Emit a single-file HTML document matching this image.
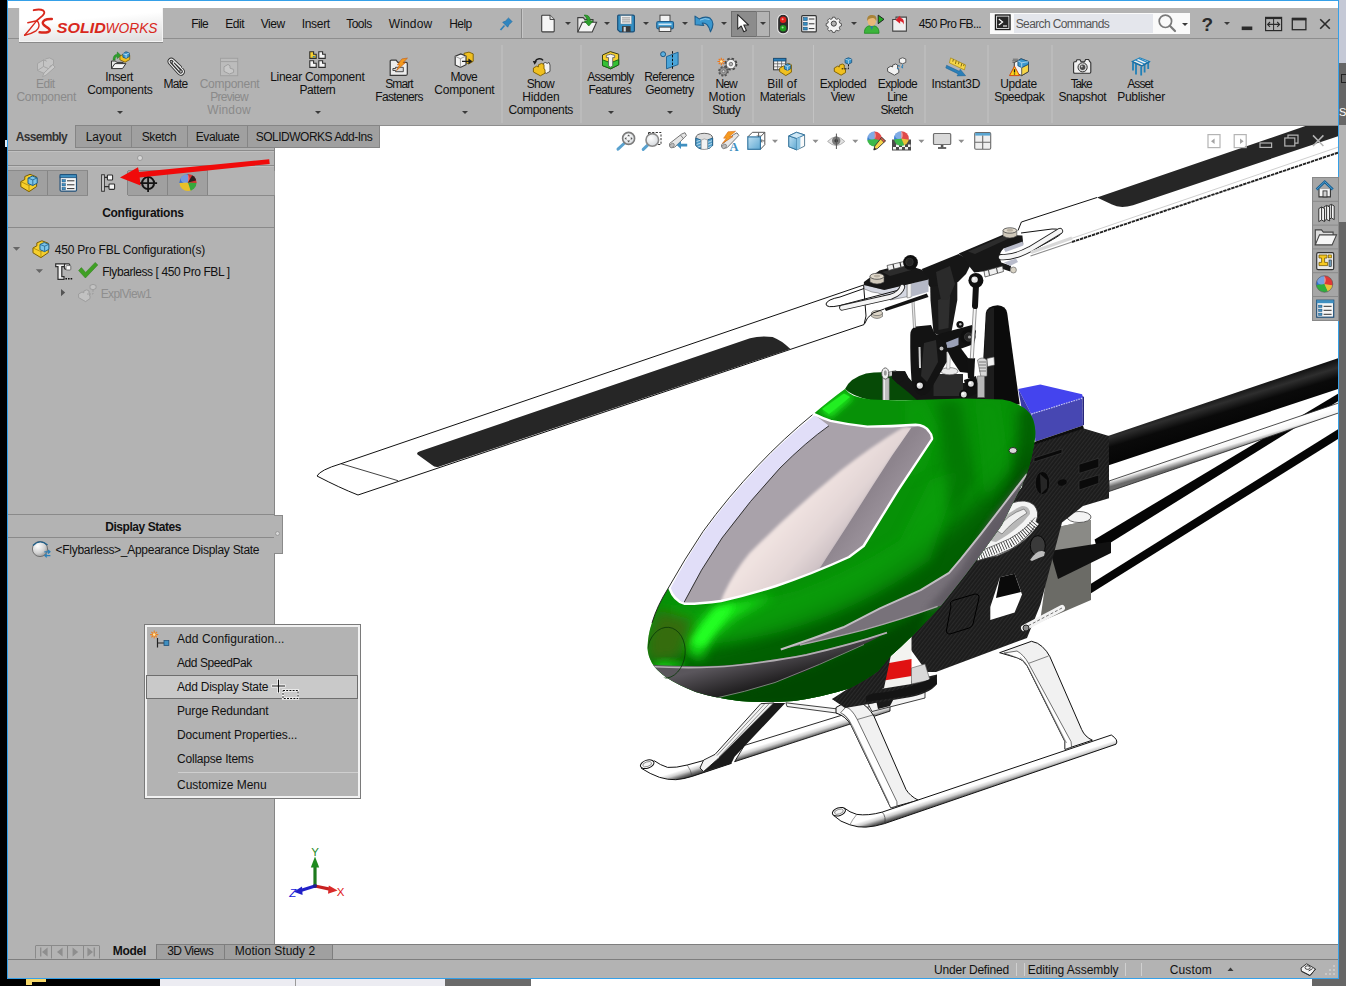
<!DOCTYPE html>
<html>
<head>
<meta charset="utf-8">
<title>SOLIDWORKS</title>
<style>
*{box-sizing:border-box;margin:0;padding:0}
html,body{width:1346px;height:986px;overflow:hidden;background:#fff}
body{position:relative;font-family:"Liberation Sans",sans-serif;font-size:12px;color:#1a1a1a}
.a{position:absolute}
.t{position:absolute;white-space:nowrap;line-height:13px;font-size:12px;color:#111}
.vl{position:absolute;width:1px;background:#c2c2c2}
.hl{position:absolute;height:1px;background:#8a8a8a}
.dd{position:absolute;width:0;height:0;border-left:3px solid transparent;border-right:3px solid transparent;border-top:3px solid #3a3a3a}
svg{position:absolute;overflow:visible}
</style>
</head>
<body>

<!-- desktop.html -->
<div class="a" style="left:0;top:0;width:8px;height:986px;background:#000"></div>
<div class="a" style="left:1339px;top:0;width:7px;height:986px;background:#666"></div>
<div class="a" style="left:1339px;top:0;width:7px;height:63px;background:#c5c9d6"></div>
<div class="a" style="left:1339px;top:125px;width:7px;height:97px;background:#b4b4b4"></div>
<div class="a" style="left:1341px;top:74px;width:5px;height:9px;border:1px solid #222;border-right:0"></div>
<div class="a" style="left:0;top:979px;width:1346px;height:7px;background:#fff"></div>
<div class="a" style="left:0;top:979px;width:160px;height:7px;background:#000"></div>
<div class="a" style="left:26px;top:979px;width:20px;height:3px;background:#f5d76a"></div>
<div class="a" style="left:26px;top:981px;width:6px;height:4px;background:#f5d76a"></div>
<div class="a" style="left:160px;top:979px;width:285px;height:7px;background:#ececf2"></div>
<div class="a" style="left:295px;top:979px;width:1px;height:7px;background:#9a9a9a"></div>
<div class="a" style="left:445px;top:979px;width:86px;height:7px;background:#6a6a6a"></div>
<div class="a" style="left:1312px;top:979px;width:34px;height:7px;background:#666"></div>
<div class="a" style="left:5px;top:140px;width:2px;height:7px;background:#dfeaf6"></div>
<div class="a" style="left:1339px;top:106px;color:#fff;font-size:11px;line-height:13px;white-space:nowrap">Sh</div>

<!-- chrome.html -->
<div class="a" style="left:7px;top:0;width:1332px;height:979px;border:1px solid #35a0e8;background:#fff"></div>
<div class="a" style="left:8px;top:8px;width:1330px;height:31px;background:#b3b3b3"></div>
<div class="hl" style="left:8px;top:38px;width:1330px;background:#8e8e8e"></div>
<div class="a" style="left:8px;top:39px;width:1330px;height:87px;background:#b3b3b3"></div>
<div class="hl" style="left:8px;top:125px;width:1330px;background:#8e8e8e"></div>

<!-- viewport.html -->
<div class="a" style="left:276px;top:126px;width:1062px;height:818px;background:#fff"></div>
<div class="a" style="left:8px;top:944px;width:1330px;height:34px;background:#b3b3b3"></div>
<div class="hl" style="left:156px;top:944px;width:1182px;background:#7e7e7e"></div>
<div class="hl" style="left:8px;top:959px;width:1330px;background:#7e7e7e"></div>

<!-- heli.html -->
<svg style="left:0;top:0" width="1346" height="986" viewBox="0 0 1346 986">
<defs>
<clipPath id="vpc"><rect x="276" y="126" width="1062" height="818"/></clipPath>
<filter id="b3" x="-20%" y="-20%" width="140%" height="140%"><feGaussianBlur stdDeviation="3"/></filter>
<filter id="b6" x="-20%" y="-20%" width="140%" height="140%"><feGaussianBlur stdDeviation="6"/></filter>
<filter id="b10" x="-30%" y="-30%" width="160%" height="160%"><feGaussianBlur stdDeviation="10"/></filter>
<linearGradient id="gcan" gradientUnits="userSpaceOnUse" x1="800" y1="430" x2="930" y2="640">
 <stop offset="0" stop-color="#0a8f0a"/><stop offset=".35" stop-color="#029a02"/><stop offset=".7" stop-color="#018801"/><stop offset="1" stop-color="#015c01"/>
</linearGradient>
<linearGradient id="gwin" gradientUnits="userSpaceOnUse" x1="740" y1="470" x2="880" y2="560">
 <stop offset="0" stop-color="#a9a3ab"/><stop offset=".32" stop-color="#aaa2aa"/><stop offset=".42" stop-color="#e6d9da"/><stop offset=".62" stop-color="#dccdd0"/><stop offset=".7" stop-color="#9a9098"/><stop offset="1" stop-color="#8d848c"/>
</linearGradient>
<filter id="b15" x="-10%" y="-10%" width="120%" height="120%"><feGaussianBlur stdDeviation="1.600"/></filter>
<clipPath id="wleft"><path d="M600 380 L911.300 427.700 L892.100 455.400 L872.900 485.200 L847.400 525.600 L819.700 568.200 L780 640 L600 640Z"/></clipPath>
<linearGradient id="gpink" gradientUnits="userSpaceOnUse" x1="790" y1="520" x2="842.400" y2="566.500">
 <stop offset="0" stop-color="#efe2e0"/><stop offset=".45" stop-color="#e2d5d5"/><stop offset="1" stop-color="#bfb3b9"/>
</linearGradient>
<linearGradient id="gfold" gradientUnits="userSpaceOnUse" x1="860" y1="505" x2="900" y2="535">
 <stop offset="0" stop-color="#8d848d"/><stop offset="1" stop-color="#a79ea7"/>
</linearGradient>
<pattern id="carbon" width="3" height="3" patternUnits="userSpaceOnUse" patternTransform="rotate(-52)"><rect width="3" height="3" fill="#1b1b1b"/><rect width="3" height="1.200" fill="#2a2a2a"/></pattern>
<linearGradient id="gboom" gradientUnits="userSpaceOnUse" x1="1200" y1="400" x2="1211" y2="436">
 <stop offset="0" stop-color="#0c0c0c"/><stop offset=".25" stop-color="#2e2e2e"/><stop offset=".5" stop-color="#0a0a0a"/><stop offset="1" stop-color="#050505"/>
</linearGradient>
<linearGradient id="grod" gradientUnits="userSpaceOnUse" x1="1200" y1="449" x2="1203" y2="459">
 <stop offset="0" stop-color="#fff"/><stop offset=".45" stop-color="#f4f4f4"/><stop offset="1" stop-color="#6a6a6a"/>
</linearGradient>
<linearGradient id="gskid" gradientUnits="userSpaceOnUse" x1="980" y1="779" x2="984" y2="791.500">
 <stop offset="0" stop-color="#fff"/><stop offset=".32" stop-color="#fff"/><stop offset=".58" stop-color="#cfcfcf"/><stop offset=".82" stop-color="#6e6e6e"/><stop offset="1" stop-color="#3a3a3a"/>
</linearGradient>
<linearGradient id="gskid2" gradientUnits="userSpaceOnUse" x1="800" y1="728.200" x2="804" y2="741">
 <stop offset="0" stop-color="#fff"/><stop offset=".32" stop-color="#fff"/><stop offset=".58" stop-color="#cfcfcf"/><stop offset=".82" stop-color="#6e6e6e"/><stop offset="1" stop-color="#3a3a3a"/>
</linearGradient>
<linearGradient id="gunder" gradientUnits="userSpaceOnUse" x1="740" y1="660" x2="750" y2="700">
 <stop offset="0" stop-color="#5a565c"/><stop offset=".6" stop-color="#2a282a"/><stop offset="1" stop-color="#0c0c0c"/>
</linearGradient>
</defs>
<g clip-path="url(#vpc)" stroke-linejoin="round">

<!-- ============ right blade ============ -->
<path d="M1021.4 222 L1097 197.500 L1320 121 L1346 121 L1346 150 L1030.500 255.700 L1018 231 Z" fill="#fff"/>
<path d="M1097 197.500 L1320 121 L1346 121 L1346 133.500 L1133 205.300 Q1120 209 1112 204.500 Z" fill="#262626"/>
<path d="M1018 230.500 L1021.400 222 L1097 197.500" fill="none" stroke="#111" stroke-width="1"/>
<path d="M1064 241 L1340 146.500" stroke="#cfcfcf" stroke-width="1"/>
<path d="M1072 242 L1340 152" stroke="#222" stroke-width="1.900" stroke-dasharray="3.400 .8"/>
<path d="M1030.500 256 L1072 242" stroke="#8a8a8a" stroke-width="1.100"/>
<path d="M1021 233 L1052 229 Q1062 228.500 1061 233.500 Q1059 237 1030.500 251" fill="#fff" stroke="#111" stroke-width="1"/>

<!-- ============ left blade ============ -->
<path d="M341 463.700 L863.600 285 L866 316 L864 324.600 L358 495 Q340 488 317 476 Q320 470 341 463.700Z" fill="#fff" stroke="#111" stroke-width="1"/>
<path d="M341 463.700 L398 480.700" stroke="#111" stroke-width=".8"/>
<path d="M420 451.200 L750 338.300 Q760 335.500 772.600 337 Q781 340 790.400 349 L438 467 Q434.500 467.500 432 465 L417.500 454.500 Q416 452.500 420 451.200Z" fill="#262626"/>

<!-- ============ tail: supports, rod, boom ============ -->
<path d="M1061 602.400 L1346 424.200 L1346 433.900 L1061 612Z" fill="#050505"/>
<path d="M1094.600 539.400 L1346 389 L1346 396.400 L1109.200 543.500 L1097 549Z" fill="#050505"/>
<path d="M1109 481 L1346 400.500 L1346 410.400 L1109 491.500Z" fill="url(#grod)" stroke="#222" stroke-width=".8"/>
<path d="M1105 437 L1346 355.500 L1346 386.300 L1105 466.600Z" fill="url(#gboom)"/>

<!-- ============ landing gear ============ -->
<!-- far skid -->
<path d="M734.600 761.700 L744.400 745.400 L890 700.300 L890 711.100Z" fill="url(#gskid2)" stroke="#111" stroke-width=".9"/>
<path d="M641.400 768.300 Q650 774 659.400 777.300 Q668 780 675.800 779.700 Q684 779 692.100 776.400 L731.300 763.400 L705.200 760.100 L687.200 765 Q676 768 667.600 767.400 Q660 765 654.500 760.900Z" fill="url(#gskid2)" stroke="#111" stroke-width="1"/>
<path d="M687.200 765 Q691 770 692.100 776.400" fill="none" stroke="#444" stroke-width=".6"/>
<ellipse cx="647.200" cy="764.200" rx="7" ry="4" transform="rotate(-18 647.200 764.200)" fill="#fff" stroke="#111" stroke-width="1"/>
<ellipse cx="647.200" cy="764.200" rx="4.600" ry="2.300" transform="rotate(-18 647.200 764.200)" fill="#f4f4f4" stroke="#555" stroke-width=".6"/>
<!-- far struts -->
<path d="M773.800 702.900 L785.300 702.900 L734.600 756.800 L731.300 763.400 L703.600 771.500 L718.300 758.500Z" fill="#1a1a1a"/>
<path d="M760.800 703.700 L773.800 702.900 L718.300 758.500 L703.600 771.500 L700 768 L703.600 760.100 L715 754.400Z" fill="#f4f4f4" stroke="#111" stroke-width=".9"/>
<path d="M765 703.500 L717 755.500 M769.500 703.200 L719 757" stroke="#444" stroke-width=".6"/>
<!-- cross members under body -->
<path d="M785.900 702.800 L838 709 L840 713.500 L787 706.500Z" fill="#f4f4f4" stroke="#111" stroke-width=".8"/>
<path d="M868 704 L925 690 L925 698 L872 711.500Z" fill="#f4f4f4" stroke="#111" stroke-width=".8"/>
<path d="M876 700 L896 694.500 L890 706 L878 709Z" fill="#1a1a1a"/>
<!-- near front strut -->
<path d="M836 707.500 Q846 700.500 860.400 702.800 Q868 706 874.100 716.500 L906 789.500 Q910 796 918.200 800.200 L890.800 807.800 L887.800 801.700 L851.300 725.600 Q846 716 836 713Z" fill="#f1f1f1" stroke="#111" stroke-width="1"/>
<path d="M840.600 712.700 Q848 716 851.300 725.600 L887.800 801.700 L890.800 807.800 L897 806 L896.900 801.700 L857.300 719.500 Q852 709 846 707Z" fill="#fff" stroke="#333" stroke-width=".7"/>
<path d="M843 714 Q849 718 853 727 L889 803" fill="none" stroke="#555" stroke-width=".6"/>
<path d="M857.300 719.500 L874.500 714.500" stroke="#333" stroke-width=".6"/>
<!-- near rear strut -->
<path d="M999.600 652.700 L1031.500 641.300 Q1038 642.500 1042.200 646.600 Q1047 651 1049.800 656.500 L1081.700 729.600 Q1085 737 1092.400 740.200 L1065 749.300 L1065 741.700 L1027 665.600 Q1023 659.500 1017.800 658Z" fill="#f1f1f1" stroke="#111" stroke-width="1"/>
<path d="M1004 653 L1017.800 658 Q1023 659.500 1027 665.600 L1065 741.700 L1065 749.300 L1071.500 747 L1071.100 741.700 L1028.500 663.400 Q1024 655 1017 651Z" fill="#fff" stroke="#333" stroke-width=".7"/>
<path d="M1020 657.500 Q1025 661 1028.500 668 L1066.500 743" fill="none" stroke="#555" stroke-width=".6"/>
<path d="M1028.500 663.400 L1048.500 656" stroke="#333" stroke-width=".6"/>
<!-- near skid -->
<path d="M833.800 815.600 Q840 822 849.900 824.800 Q858 827.600 866 827.100 Q875 826.600 884.500 823.600 L1116 744.200 Q1119 740 1111.300 735 L882.200 812.100 Q868 816 856.800 814.400 Q849 812 845.300 808.700Z" fill="url(#gskid)" stroke="#111" stroke-width="1"/>
<path d="M882.200 812.100 Q886.500 817 884.500 823.600" fill="none" stroke="#333" stroke-width=".7"/>
<path d="M856.800 814.400 Q852 820 849.900 824.800" fill="none" stroke="#555" stroke-width=".6"/>
<ellipse cx="838.900" cy="811.700" rx="6.800" ry="3.900" transform="rotate(-18 838.900 811.700)" fill="#fff" stroke="#111" stroke-width="1"/>
<ellipse cx="838.900" cy="811.700" rx="4.600" ry="2.300" transform="rotate(-18 838.900 811.700)" fill="#f4f4f4" stroke="#555" stroke-width=".6"/>

<!-- ============ servo, gear ============ -->
<path d="M1053 528 L1091 520 L1091 600 L1040 622 Z" fill="#6b6b66"/>
<path d="M1053 528 L1091 520 L1091 546 L1053 556Z" fill="#8a8a86"/>
<path d="M1050 551 L1111 541.500 L1111 553 L1058 579Z" fill="#111"/>
<ellipse cx="1079" cy="517" rx="12" ry="5.500" fill="#f4f4f4" stroke="#444" stroke-width=".8"/>
<!-- ============ anti-rotation fin & blue box ============ -->
<path d="M985.800 313 Q987 306 997.700 305.300 Q1006 306 1007.200 313 L1019.700 404.600 L984.600 401 L983.400 357Z" fill="#0b0b0b"/>
<path d="M986.500 313 Q988 308 994 307.500 L994 400 L985 400 L984 357Z" fill="#1d1d1d"/>
<path d="M1018.200 389 L1040.300 384.400 L1082.100 394.300 L1083.200 398.500 L1031.200 414.100Z" fill="#4444ee"/>
<path d="M1031.200 414.100 L1082.500 398.100 L1082.900 425.500 L1035.700 441.500Z" fill="#4747b2"/>
<path d="M1018.200 389 L1031.200 414.100 L1035.700 441.500 L1024 422Z" fill="#3a3aa8"/>
<path d="M1082.500 396 L1084 397 L1084 425 L1082.900 425.500Z" fill="#26267a"/>
<path d="M1031.200 414.100 L1082.500 398.100" stroke="#c8c8f8" stroke-width="1.100" stroke-dasharray="1.600 1"/>

<!-- ============ frame ============ -->
<path d="M1026 447 L1083 428.300 L1109 435.900 L1109 498.200 L1083 506 L1062 522.600 L1040.400 604.800 L1027 638 L936 672 L927 672 L911 650 L905 630 L956 572 L1022 487Z" fill="url(#carbon)"/>
<path d="M1000 577.300 L1014.600 573.700 L1022 594.400 L1014.600 612.600 L990.300 620 L990.300 607Z" fill="#fff"/>
<path d="M1000 577.300 L1014.600 573.700 L1021 592 L996 598Z" fill="#0a0a0a"/>
<ellipse cx="1037.800" cy="545.700" rx="7.500" ry="10" fill="#3a3a3a" stroke="#000" stroke-width=".8"/>
<path d="M1030 560 Q1038 548 1045 552 L1044 556 Q1038 558 1032 561Z" fill="#bdbdbd"/>
<path d="M951 606 Q949 602 953 600.500 L975 594 Q979.500 594 979 598 L973 624 Q972 627 969 628 L950 634 Q946 634 946.500 630Z" fill="none" stroke="#000" stroke-width="1"/>
<ellipse cx="1042.500" cy="483" rx="7.300" ry="11.500" fill="#090909" stroke="#2e2e2e" stroke-width=".7"/>
<path d="M1040 474 L1047 480 L1047 488 L1041 494Z" fill="#262626"/>
<ellipse cx="1062.300" cy="482.500" rx="4.500" ry="3" transform="rotate(-15 1062.300 482.500)" fill="#0a0a0a"/>
<path d="M1035.700 441.500 L1082.900 425.500 L1084 428.500 L1026 447.500Z" fill="#0d0d0d"/>
<path d="M1034 458 L1062 449 L1062 453 L1034 462Z M1079 464.300 L1098.800 458.200 L1098.800 467.300 L1079 473.400Z M1079 481 L1098.800 474.900 L1098.800 483.300 L1079 490.100Z" fill="#0a0a0a" stroke="#3a3a3a" stroke-width=".6"/>
<!-- main gear (on top of frame) -->
<path d="M970 556 Q985 520 1012 503 Q1026 498 1034 505 Q1040 512 1036.200 521 L1034.200 530 Q1022 546 997.600 556 L977.400 560Z" fill="#f4f4f4" stroke="#333" stroke-width=".8"/>
<path d="M985 540 Q1000 515 1022 506 Q1030 506 1030 514 Q1018 530 996 542Z" fill="#b8b8b8"/>
<path d="M996 530 Q1008 514 1024 509 L1027 513 Q1012 522 1002 534Z" fill="#efefef" stroke="#555" stroke-width=".6"/>
<path d="M976 557 Q993 551 1010 543 Q1026 534 1035.500 521.500" fill="none" stroke="#fafafa" stroke-width="8.500"/>
<path d="M976 557 Q993 551 1010 543 Q1026 534 1035.500 521.500" fill="none" stroke="#222" stroke-width="8.500" stroke-dasharray=".7 1.900"/>
<path d="M975 553 Q993 546.500 1010 538.500 Q1026 529.500 1035 517.500" fill="none" stroke="#444" stroke-width=".7"/>
<path d="M977.400 561 Q995 557 1012 548.500 Q1027 539 1035 526" fill="none" stroke="#333" stroke-width=".8"/>
<!-- link at frame bottom -->
<path d="M1024 628 L1062 608" stroke="#f2f2f2" stroke-width="6" stroke-linecap="round"/>
<path d="M1024 628 L1062 608" stroke="#555" stroke-width=".8" stroke-dasharray="3 2"/>
<circle cx="1026" cy="628" r="3" fill="#8a8a8a" stroke="#222"/>

<!-- ============ motor & bottom plate ============ -->
<path d="M832 699 L937 674.600 L937 684 Q930 694 905 698 L845 708Z" fill="url(#carbon)"/>
<path d="M880 640 L911.500 632 L911.500 684 L874 690Z" fill="#f3f3f0"/>
<path d="M878 665 L911.500 659 L911.500 676 L875 682Z" fill="#e01212"/>
<path d="M911.500 668 L925 664 L930 680 L911.500 684Z" fill="#d9d9d9" stroke="#555" stroke-width=".6"/>
<path d="M866 694 Q905 692 936 676 L937 684 Q922 695 900 697 L866 702Z" fill="#141414"/>

<path d="M874 672 L891 655 L884 688 L845 706 L832 699Z" fill="url(#carbon)"/>
<!-- ============ canopy back rim (inside) ============ -->
<path d="M845 389 Q850 378 866 373.500 Q884 370.500 905 374.500 L930 400 L870 400 Q852 396 845 389Z" fill="#064a06"/>

<!-- ============ rotor head ============ -->
<!-- head base / swash -->
<path d="M891.900 371.300 L905 371.300 L908 377 L913 383 L985 383 L985 401 L918 401 L908 392 L898 384 L891.900 378Z" fill="#151515"/>
<path d="M933.500 374 L963 374 L963 396 L933.500 396Z" fill="#2b2b2b"/>
<ellipse cx="949.500" cy="371.200" rx="8.500" ry="3.600" fill="#e9e9e9" stroke="#555" stroke-width=".6"/>
<path d="M947 350 L950.600 350 L949.800 369 L946.600 369Z" fill="#f0f0f0" stroke="#777" stroke-width=".5"/>
<!-- mast block -->
<path d="M929.900 270 L957.300 262 L957.300 300 L951.300 333 Q942 337 933.500 333 L930.500 300Z" fill="#181818"/>
<path d="M938 300 L950 296 L948.500 328 L938.500 330Z" fill="#2e2e2e"/>
<!-- cross arm + bearing -->
<path d="M928 337 L972 325 L976 331 L974 344 L960 349 L946 352 L930 346Z" fill="#121212"/>
<circle cx="968" cy="337" r="7.600" fill="#0e0e0e"/><circle cx="968.600" cy="337" r="4.200" fill="#262626" stroke="#3c3c3c" stroke-width=".7"/><circle cx="969.500" cy="337" r="1.600" fill="#9a9a9a"/>
<circle cx="960" cy="324.500" r="3.600" fill="#111"/><circle cx="960.300" cy="324.300" r="1.300" fill="#bdbdbd"/>
<path d="M946 342.500 L958.500 337.500 L958.500 345 L947.500 349.500Z" fill="#9aa0b6"/>
<!-- A arm -->
<path d="M946 348 L960 347 L971 362 L969 373 L960 372 L952 360Z" fill="#101010"/>
<!-- left arm -->
<path d="M910.300 335 Q910.300 328 916 326.500 L931 325 L934 332 L946.600 345 L946.600 362 L931 389 Q926 396.500 920 395 Q913 392 911.500 380 Q910 360 910.300 335Z" fill="#131313"/>
<path d="M924 343 L936 340 L938 362 L927 382 L921 376Z" fill="#2a2a2a"/>
<path d="M918.500 347 L920.500 347 L921 368 L919 368Z" fill="#cfcfcf"/>
<circle cx="919.800" cy="385.600" r="4" fill="#dcdcdc" stroke="#0c0c0c" stroke-width="1.800"/><circle cx="918.800" cy="384.600" r="1.300" fill="#fff"/>
<circle cx="941.500" cy="348.500" r="2.600" fill="#bdbdbd" stroke="#111" stroke-width="1.200"/>
<!-- right lower link & balls -->
<path d="M966.800 358.200 L975.100 358.200 L974 378 L968 378Z" fill="#111"/>
<path d="M964 380 L976 376 L980 392 L968 398Z" fill="#111"/>
<circle cx="970.900" cy="383.800" r="3.800" fill="#dcdcdc" stroke="#0c0c0c" stroke-width="1.800"/><circle cx="970" cy="383" r="1.200" fill="#fff"/>
<circle cx="963.800" cy="394.500" r="3.800" fill="#dcdcdc" stroke="#0c0c0c" stroke-width="1.800"/><circle cx="963" cy="393.600" r="1.200" fill="#fff"/>
<!-- silver bits right -->
<path d="M977.500 360 Q982 356 987 360 L987 376 L981 377Z" fill="#d8d8d8" stroke="#555" stroke-width=".6"/>
<path d="M979 362 L986 362 M979 365 L986 365 M979 368 L986 368 M979 371 L986 371" stroke="#555" stroke-width=".7"/>
<path d="M987 358.500 L994 357 L994.500 365 L987.500 366.600Z" fill="#f2f2f2" stroke="#555" stroke-width=".6"/>
<path d="M977.500 376 L984.600 376 L984.600 397.500 L977.500 397.500Z" fill="#b8b8b8" stroke="#555" stroke-width=".5"/>
<!-- pushrods -->
<path d="M912.900 300 L914.600 327.800" stroke="#e8e8e8" stroke-width="2.200"/><path d="M911.800 300 L913.500 327.800 M914 300 L915.700 327.800" stroke="#555" stroke-width=".5"/>
<path d="M975 307 L971.800 358.200" stroke="#f4f4f4" stroke-width="3"/><path d="M976.500 307 L973.300 358.200 M973.500 307 L970.300 358.200" stroke="#555" stroke-width=".6"/>
<path d="M975.900 287 L975 306" stroke="#111" stroke-width="6" stroke-linecap="round"/>
<circle cx="975.900" cy="280.400" r="7.500" fill="#0e0e0e"/><circle cx="974.600" cy="279.600" r="3.200" fill="#e4e4e4"/><circle cx="973.800" cy="278.800" r="1.100" fill="#fff"/>
<!-- center hub bar -->
<path d="M921.900 268.900 L958.700 254 L972 262 L966 274 L958 282 L930 287 L925 280Z" fill="#161616"/>
<path d="M936 272 L950 266 L955 284 L948 300 L941 300 L938 286Z" fill="#2a2a2a"/>
<!-- right grip -->
<path d="M958.700 253.400 L1003.600 234.600 L1022.400 235.400 L1023.300 244.400 L1003.600 248.500 Q997.500 254 1001.200 262.400 L1011 265.700 L1010.200 271.400 L1002.800 268.900 L974.200 272.400 L969 266 L964 258Z" fill="#171717"/>
<path d="M968 251.500 L1003 236.500 L1012 237 L975 254Z" fill="#2c2c2c"/>
<path d="M1003.600 248.500 L1022.600 241.500 L1023.300 245.500 L1005.500 252Z" fill="#b9bccb"/>
<path d="M1004 262.500 L1016 258.500 L1018 262 L1010 266Z" fill="#b9bccb"/>
<!-- silver pin right -->
<path d="M984 271 L1002.500 266 L1003.500 271.500 L985 277Z" fill="#f0f0f0" stroke="#333" stroke-width=".7"/>
<path d="M988.500 270 L989.500 275.500M996.500 268 L997.500 273" stroke="#444" stroke-width="1"/>
<!-- bolts right -->
<path d="M1003 230.500 L1003 236 Q1009.900 240 1016.800 236 L1016.800 230.500Z" fill="#cfc8ba" stroke="#444" stroke-width=".6"/>
<ellipse cx="1009.900" cy="230.500" rx="6.900" ry="2.700" fill="#e0d9cb" stroke="#444" stroke-width=".8"/>
<ellipse cx="1009.900" cy="230.300" rx="3.200" ry="1.200" fill="#b8b0a2"/>
<circle cx="1013.400" cy="270" r="3" fill="#d8d2c4" stroke="#555" stroke-width=".6"/>
<!-- right blade root clip (white U) -->
<path d="M1001 257.200 Q1013.500 258 1029.800 249.300 L1060 231" fill="none" stroke="#222" stroke-width="6.200" stroke-linecap="round"/>
<path d="M1001 257.200 Q1013.500 258 1029.800 249.300 L1060 231" fill="none" stroke="#f6f6f6" stroke-width="4.400" stroke-linecap="round"/>
<path d="M1031 252.500 L1072 238" stroke="#d8d8d8" stroke-width="3"/>
<!-- left grip -->
<path d="M884.300 308.200 L926.800 293.500 L928.500 297 L886 311Z" fill="#141414"/>
<path d="M863.900 284.500 L884.300 289.400 L907.200 283.600 L907.200 296.700 L890 300 Q884 293 872 292 L864.500 289Z" fill="#d5d8e2" stroke="#555" stroke-width=".5"/>
<path d="M907.200 283.600 L911.300 283 L911.300 297 L907.200 298Z" fill="#f2f2f2" stroke="#555" stroke-width=".5"/>
<path d="M911.300 283.600 L928.500 278.700 L928.500 291.800 L911.300 296.700Z" fill="#b4b8c6"/>
<path d="M863.900 282 L879.400 270.600 L903.900 264 L921.900 269.800 L928.500 277.100 L928.500 279.500 L884.300 290 L863.900 285Z" fill="#171717"/>
<path d="M882 272 L903 266.500 L913 269.500 L890 276Z" fill="#2c2c2c"/>
<!-- silver pin left + ball -->
<path d="M887 265.500 L908 260.500 L909.500 265 L888.500 270.500Z" fill="#f0f0f0" stroke="#333" stroke-width=".7"/>
<path d="M893 264 L894 269M900 262.300 L901 267.300" stroke="#333" stroke-width="1.200"/>
<circle cx="910.500" cy="262.400" r="7.400" fill="#0e0e0e"/><circle cx="909.500" cy="262" r="3.800" fill="#242424" stroke="#3a3a3a" stroke-width=".6"/>
<!-- bolts left -->
<path d="M870 276.300 L870 282 Q877 286 884 282 L884 276.300Z" fill="#cfc8ba" stroke="#444" stroke-width=".6"/>
<ellipse cx="877" cy="276.300" rx="7" ry="3" fill="#e0d9cb" stroke="#444" stroke-width=".8"/>
<ellipse cx="877" cy="276.100" rx="3.200" ry="1.300" fill="#b8b0a2"/>
<path d="M871.500 313 L871.500 316.500 Q877 320.500 882.500 316.500 L882.500 313Z" fill="#cfc8ba" stroke="#555" stroke-width=".6"/>
<ellipse cx="877" cy="313" rx="5.500" ry="2.600" fill="#ddd6c8" stroke="#555" stroke-width=".6"/>
<!-- left blade root loop -->
<path d="M899 290 L840 305.500 Q826 308.500 826 304 Q827 299.500 840 297 L864 288.500" fill="none" stroke="#111" stroke-width="1"/>
<path d="M842 307.700 L890.900 296.700 Q900.700 293 902.300 286.900" fill="none" stroke="#222" stroke-width="5.800" stroke-linecap="round"/>
<path d="M842 307.700 L890.900 296.700 Q900.700 293 902.300 286.900" fill="none" stroke="#f4f4f4" stroke-width="4" stroke-linecap="round"/>
<path d="M864.700 323.700 Q866 318 872.900 313 L884.300 309" fill="none" stroke="#111" stroke-width="1"/>
<!-- antenna-like pin on canopy front -->
<path d="M882.600 378 L889.300 378 L889.300 401 L882.600 401Z" fill="#bdbdbd" stroke="#555" stroke-width=".5"/>
<path d="M884.300 378 V401" stroke="#eee" stroke-width="1.300"/>
<ellipse cx="885.300" cy="373.500" rx="3.600" ry="5.600" fill="#efefef" stroke="#444" stroke-width=".8"/>
<ellipse cx="885.300" cy="373" rx="1.500" ry="2.800" fill="#9a9a9a"/>
<path d="M889 372 L896 370.500 L896 375 L889 376.500Z" fill="#cfcfcf" stroke="#444" stroke-width=".5"/>
<path d="M892 371.300 L905 371.300 L908 377 L898 384 L892 378Z" fill="#151515"/>

<!-- ============ canopy ============ -->
<path id="canopy" d="M647.500 648 Q648 634 652 622.800 Q657 606 668.300 588 Q684 560 703 531.500 Q728 497 757.700 465.800 Q784 438 812.500 414.700 Q830 400 845 389 Q849 394 853.700 395.700 Q862 398.500 871 399.600 Q888 400.500 905.900 400.200 L963.800 398.600 L1002.500 399.600 Q1012 401 1019.900 405.400 Q1027 409 1031.500 416 Q1035 423 1035.300 431.500 Q1035.500 438 1034.300 443 Q1032 458 1026 476.500 L1018 492.700 L1001.700 525.200 L981.400 553.600 L965.200 574.900 L938.800 608.400 L911.600 636.500 Q900 648 889.300 657.300 Q884 664 878 671 Q866 680 849 688.500 Q822 697 794 701 Q766 703 739.500 701 Q715 698 695.700 692 Q678 685 666.500 677.500 Q656 670 652 663 Q648 656 647.500 648Z" fill="#079107"/>
<clipPath id="cc"><use href="#canopy"/></clipPath>
<g clip-path="url(#cc)">
 <!-- broad shading -->
 <path d="M640 700 L640 660 Q760 640 860 590 Q960 530 1040 440 L1050 520 L940 680 L800 720Z" fill="#024f02" opacity=".75" filter="url(#b10)"/>
 <path d="M1040 400 L1040 480 L1000 520 Q1020 460 1018 410Z" fill="#035003" opacity=".7" filter="url(#b6)"/>
 <path d="M668 604 Q720 612 800 590 Q850 572 900 540 L930 480 L960 470 L930 560 Q860 610 780 632 Q720 646 680 646Z" fill="#0aa60a" opacity=".55" filter="url(#b6)"/>
 <!-- vertical bands right of window -->
 <path d="M905 400 L925 400 L940 430 L925 470 L905 480 Z" fill="#10a410" opacity=".45" filter="url(#b6)"/>
 <path d="M938 400 L960 400 L975 480 L950 520Z" fill="#036403" opacity=".5" filter="url(#b6)"/>
 <path d="M975 400 L1000 400 L1010 470 L985 500Z" fill="#0c9c0c" opacity=".4" filter="url(#b6)"/>
 <!-- top highlight near opening -->
 <path d="M819 410.200 L844 391.900 L853.700 397.700 L830.600 418Z" fill="#1fe41f" filter="url(#b3)"/>
 <path d="M822 409 L844 393.500 L850 397 L829 414Z" fill="#22ee22"/>
 <!-- front highlight -->
 <path d="M686 648 L696 628 L714 607 L744 601 L776 594 L736 616 L712 636 L700 660Z" fill="#1cf41c" opacity=".9" filter="url(#b6)"/>
 <path d="M690 642 L716 608 L736 604 L704 646Z" fill="#20ff20" filter="url(#b3)"/>
 <!-- nose shading -->
 <path d="M646 642 L658 610 L692 620 L680 658 L650 662Z" fill="#356c10" filter="url(#b6)"/>
 <path d="M700 690 Q760 686 820 668 L900 636 L915 650 L860 700 L700 706Z" fill="#013c01" opacity=".6" filter="url(#b6)"/>
 <path d="M650 664 L664 660 L690 664 L660 672Z" fill="#18d018" opacity=".8" filter="url(#b3)"/>
 <!-- lower right dark green -->
 <path d="M712 699 Q760 690 806 671 Q850 652 887 633 L925 610 L915 660 L850 700 L730 710Z" fill="#024a02" opacity=".9" filter="url(#b3)"/>
 <!-- S2 underside swoosh -->
 <path d="M640 664 Q700 668 735 664.600 Q775 660 806.400 653.900 Q850 644 887 632.300 Q876 639 864 644.200 L834.300 657.300 Q820 664 806 671 Q790 677 775 682 Q757 688 740 692 L712 698.500 L690 700 L640 690Z" fill="url(#gunder)"/>
 <path d="M648 666.500 Q700 669 735 665.500 Q775 661 806.400 654.800 Q850 645 887 632.600" fill="none" stroke="#b2aeb2" stroke-width="1.700"/>
 <path d="M864 644.500 Q820 665 775 682.500 Q745 692 712 699" fill="none" stroke="#8a868a" stroke-width=".9"/>
 <!-- S1 swoosh -->
 <path d="M780.800 649.500 Q812 639 843.200 627.300 L880 608.400 L920.600 590.100 L949 572.900 L961.100 558.700 L981.400 533.300 L1001.700 507 L1026 475.500 L1045 470 L1045 500 L970 600 L937.600 606.400 Q900 620 864 629.800 Q836 637 810 643Z" fill="#78727a"/>
 <path d="M990 520 L1030 470 L1045 480 L960 600 L925 611 L960 570Z" fill="#5c575e" opacity=".8" filter="url(#b3)"/>
 <path d="M780.800 649.500 Q812 639 843.200 627.300 L880 608.400 L920.600 590.100 L949 572.900 L961.100 558.700 L981.400 533.300 L1001.700 507 L1027 474" fill="none" stroke="#c2bec2" stroke-width="2"/>
 <path d="M800 645 Q836 637 864 629.800 Q900 620 937.600 606.400" fill="none" stroke="#aaa6aa" stroke-width="1.300"/>
</g>
<!-- nose cap circle -->
<ellipse cx="666.200" cy="652.700" rx="19" ry="25.500" transform="rotate(6 666 652)" fill="none" stroke="#0a3a0a" stroke-width=".8" clip-path="url(#cc)"/>
<!-- window -->
<defs><path id="win" d="M814.100 414.100 Q822 418 830.600 420.800 Q848 424.500 867.300 426.600 Q892 426.500 915.600 424.700 Q925 425 929.100 431.500 Q932.500 435 932 439.200 L898.200 490 L863.600 546 L849 557 Q812 574 776 586 Q748 595 721 601 Q700 604 684.700 603.800 Q674 601 669.400 588 Q684 560 703 531.500 Q728 497 757.700 465.800 Q784 438 814.100 414.100Z"/></defs>
<use href="#win" fill="#a9a2aa"/>
<clipPath id="wc"><use href="#win"/></clipPath>
<g clip-path="url(#wc)">
 <path d="M911.300 427.700 L940 420 L940 450 L870 548 L819.700 568.200 L847.400 525.600 L872.900 485.200 L892.100 455.400Z" fill="url(#gfold)"/>
 <g clip-path="url(#wleft)">
  <path d="M902 428 L915 426 L893.100 455.400 L873.900 485.200 L848.400 525.600 L820.700 568.200 L790 590 L719 606 L723.900 593.800 Q734 572 749.400 553.300 Q790 512 841 470.300 Q872 446 902 428Z" fill="url(#gpink)" filter="url(#b15)"/>
 </g>
 <path d="M814.300 414.700 Q784 438 757.700 465.800 Q728 497 703 531.500 Q684 560 669.400 588 Q672 598 684 602.500 Q700 570 722 538 Q750 500 780 468 Q806 442 829 425.700Z" fill="#e1def8"/>
 <path d="M829 425.700 Q806 442 780 468 Q750 500 722 538 Q700 570 684 602.500" fill="none" stroke="#222" stroke-width=".9"/>
</g>
<use href="#win" fill="none" stroke="#fff" stroke-width="2.400"/>
<path d="M812.500 414.700 Q784 438 757.700 465.800 Q728 497 703 531.500 Q684 560 668.300 588 Q657 606 652 622.800" fill="none" stroke="#1a1a1a" stroke-width=".9"/>
<!-- screw -->
<ellipse cx="1013" cy="450.500" rx="4" ry="3" fill="#d8d8d8" stroke="#222" stroke-width=".9"/>
</g>
</svg>

<!-- hud.html -->
<svg style="left:0;top:0" width="1346" height="986" viewBox="0 0 1346 986">
<defs>
<linearGradient id="gb1" x1="0" y1="0" x2="1" y2="1"><stop offset="0" stop-color="#bfe0f2"/><stop offset="1" stop-color="#5ea8d2"/></linearGradient>
<radialGradient id="glens" cx=".4" cy=".35" r=".7"><stop offset="0" stop-color="#ffffff"/><stop offset="1" stop-color="#d4d8dc"/></radialGradient>
<clipPath id="ball1"><circle cx="874.600" cy="139" r="7.400"/></clipPath>
<clipPath id="ball2"><circle cx="901.400" cy="138.600" r="7.400"/></clipPath>
<clipPath id="ball3"><circle cx="1324.500" cy="284" r="8.300"/></clipPath>
</defs>
<!-- zoom to fit -->
<path d="M624.600 143 L618 149.200" stroke="#5aa2cf" stroke-width="3" stroke-linecap="round"/>
<circle cx="628.600" cy="138.400" r="6" fill="url(#glens)" stroke="#7c7c7c" stroke-width="1.600"/>
<path d="M628.600 134.400 l1.500 1.800 h-3z M628.600 142.400 l1.500 -1.800 h-3z M624.600 138.400 l1.800 -1.500 v3z M632.600 138.400 l-1.800 -1.500 v3z" fill="#555"/>
<!-- zoom to area -->
<rect x="648.500" y="132.500" width="12.500" height="12" fill="none" stroke="#333" stroke-width="1" stroke-dasharray="2.200 1.400"/>
<path d="M648.400 144.400 L643.200 149.400" stroke="#5aa2cf" stroke-width="3" stroke-linecap="round"/>
<circle cx="652.300" cy="139.900" r="6.300" fill="url(#glens)" stroke="#8a8a8a" stroke-width="1.600"/>
<!-- previous view -->
<g transform="translate(668,131.500)"><path d="M1.600 12 L13.600 2.600 L17 1.200 L18.400 4 L16 6.400 L6.800 15.600 Q3.400 17.400 1.600 14.600Z" fill="#e6e6e6" stroke="#777" stroke-width="1"/><path d="M12.600 3.600 L15.400 7.200" stroke="#777" stroke-width=".9"/><ellipse cx="4" cy="14" rx="2.600" ry="1.800" transform="rotate(-40 4 14)" fill="#bdbdbd" stroke="#777" stroke-width=".7"/><path d="M8.600 13.600 L13 9.800 V12.200 H19.200 V15 H13 V17.400Z" fill="#3f8fc0"/></g>
<!-- section view -->
<g transform="translate(695,132.500)"><path d="M.8 5.600 Q.8 1 9.200 .8 Q17.600 1 17.600 5.600 V13 Q15 16.600 9.200 16.800 Q3.400 16.600 .8 13Z" fill="#dcdcdc" stroke="#666" stroke-width="1"/><path d="M.8 5.600 L6.200 7.600 V16.600 Q2.400 15.400 .8 13Z M17.600 5.600 L12.600 7.400 V16.400 Q16 15.200 17.600 13Z" fill="#4f9cc8" stroke="#1f5f8a" stroke-width=".9"/><path d="M1.600 9 L5.600 7.600M1.600 12 L6 10.400M2.600 14.600 L6 13.400M13 9.800 L17 8.200M13 12.600 L17 11M13 15.400 L16.600 13.800" stroke="#cfe6f3" stroke-width=".8"/><path d="M6.200 7.600 Q9.200 5.400 12.600 7.400 V16.400 Q9.200 17.400 6.200 16.600Z" fill="#f2f2f2" stroke="#888" stroke-width=".6"/></g>
<!-- dynamic annotation -->
<g transform="translate(720,131)"><path d="M1.600 13.600 L13.600 3.600 L17 1.800 L18.800 4.400 L16.400 7 L7.200 16.600 Q3.600 18.600 1.600 15.800Z" fill="#e6e6e6" stroke="#777" stroke-width="1"/><ellipse cx="4.200" cy="15.400" rx="2.600" ry="1.800" transform="rotate(-40 4.200 15.400)" fill="#bdbdbd" stroke="#777" stroke-width=".7"/><path d="M8 .8 L15.600 .2 L9.600 5.600 L13 5.600 L2.400 12.400 L6.400 7.200 L3.600 7.200Z" fill="#f59a20" stroke="#d06010" stroke-width=".5"/><text x="9.600" y="19.600" font-family="Liberation Serif" font-weight="bold" font-size="12.500" fill="#3f8fc0">A</text></g>
<!-- view orientation -->
<g transform="translate(747,131.500)"><path d="M5.400 .8 H17.800 V13.200 L13.400 17.800 M17.800 .8 L13.400 5.400 M5.400 .8 L.8 5.400" fill="none" stroke="#555" stroke-width="1"/><path d="M11.600 1.400V5.400M10 3.800L11.600 5.400L13.200 3.800M17.400 9.400H13.600M15 7.800L13.600 9.400L15 11" fill="none" stroke="#333" stroke-width=".8"/><rect x=".8" y="5.400" width="12.600" height="12.400" fill="url(#gb1)" stroke="#2a6f9c" stroke-width="1.100"/></g>
<!-- display style -->
<g transform="translate(788,131.500)"><path d="M.8 4.400 L8.400 .8 L16.600 3.400 V14.600 L8.800 18.400 L.8 15.200Z" fill="#fafafa" stroke="#5a7f96" stroke-width="1"/><path d="M.8 4.400 L8.800 7 V18.400 L.8 15.200Z" fill="url(#gb1)" stroke="#2a6f9c" stroke-width=".9"/><path d="M.8 4.400 L8.400 .8 L16.600 3.400 L8.800 7Z" fill="#cfe8f5" stroke="#2a6f9c" stroke-width=".9"/><path d="M8.800 7 L12.400 5.400 V16.600 L8.800 18.400Z" fill="#8cc4e2"/></g>
<!-- eye -->
<g transform="translate(827,134)"><path d="M.6 7.400 Q9.200 -1.600 17.800 7.400 Q9.200 15.600 .6 7.400Z" fill="#e2e2e2" stroke="#b0b0b0" stroke-width="1"/><circle cx="9.200" cy="6.800" r="4.200" fill="#7a7a7a"/><circle cx="9.200" cy="6.800" r="1.800" fill="#3c3c3c"/><path d="M9.400 -.4 V15" stroke="#555" stroke-width="1"/></g>
<!-- edit appearance -->
<g clip-path="url(#ball1)"><rect x="866" y="130" width="9" height="10.500" fill="#3d7fd6"/><rect x="874.600" y="130" width="9" height="11" fill="#e04a4a"/><path d="M866 140 L874.600 139 L883 141 V148 H866Z" fill="#3cb84a"/><circle cx="872" cy="135.500" r="4" fill="#fff" opacity=".35"/></g>
<path d="M881.800 137.400 L885.400 141 L877.400 148.600 L873.800 150 L874.800 146Z" fill="#f6d44a" stroke="#333" stroke-width=".9"/><path d="M881.800 137.400 L885.400 141 L884 142.400 L880.400 138.800Z" fill="#e05a4a" stroke="#333" stroke-width=".7"/><path d="M873.800 150 L874.400 147.400 L876.200 149Z" fill="#222"/>
<!-- apply scene -->
<rect x="892" y="139.500" width="19" height="11" fill="#4a4a4a"/><g fill="#f2f2f2"><rect x="893" y="147" width="3" height="2.500"/><rect x="899" y="147" width="3" height="2.500"/><rect x="905" y="147" width="3" height="2.500"/><rect x="896" y="144.500" width="3" height="2.500"/><rect x="902" y="144.500" width="3" height="2.500"/><rect x="908" y="144.500" width="2.500" height="2.500"/></g>
<g clip-path="url(#ball2)"><rect x="893" y="130" width="8.600" height="10" fill="#3d7fd6"/><rect x="901.400" y="130" width="9" height="10.500" fill="#e04a4a"/><path d="M893 139.600 L901.400 138.600 L906 147 H893Z" fill="#3cb84a"/><path d="M901.400 138.600 L910 140 V147 H905Z" fill="#e8c23a"/><circle cx="899" cy="135" r="4" fill="#fff" opacity=".35"/></g>
<!-- monitor -->
<rect x="933.500" y="133.500" width="17.200" height="11" rx="1" fill="#d9d9d9" stroke="#6e6e6e" stroke-width="1.200"/><rect x="940.800" y="145" width="2.600" height="2.400" fill="#555"/><rect x="938" y="147.200" width="8.200" height="1.600" fill="#444"/>
<!-- grid -->
<rect x="974.700" y="132.500" width="16" height="16.800" rx="1.200" fill="#efefef" stroke="#6a6a6a" stroke-width="1.100"/><rect x="975.200" y="133" width="15" height="2.600" fill="#5aa6d2"/><path d="M982.700 135.600V149M975 142.200H990.500" stroke="#6a6a6a" stroke-width="1.100"/>
<!-- hud dropdown arrows -->
<g fill="#8e8e8e"><path d="M772 139.800 h6 l-3 3.200z M812.500 139.800 h6 l-3 3.200z M852.300 139.800 h6 l-3 3.200z M918.400 139.800 h6 l-3 3.200z M958.300 139.800 h6 l-3 3.200z"/></g>
<!-- doc window controls -->
<g fill="none" stroke="#b4b4b4" stroke-width="1.200"><rect x="1208" y="134.600" width="12" height="13"/><rect x="1234.200" y="134.600" width="12" height="13"/><rect x="1284.800" y="138" width="10" height="8"/><path d="M1288 138 V135.200 H1298 V143.200 H1295"/><path d="M1313 135.400 L1323.400 146M1323.400 135.400 L1313 146" stroke-width="1.500"/></g>
<path d="M1214.600 138.400 L1211 141.200 L1214.600 144Z M1240 138.400 L1243.600 141.200 L1240 144Z" fill="#a4a4a4"/><rect x="1260" y="143" width="11.600" height="4.400" fill="none" stroke="#b4b4b4" stroke-width="1.200"/>
<!-- task pane tabs -->
<rect x="1312.500" y="177.500" width="26" height="143" fill="#a6a6a6" stroke="#888" stroke-width="1"/>
<path d="M1312.500 201.300H1338M1312.500 225.100H1338M1312.500 248.900H1338M1312.500 272.700H1338M1312.500 296.500H1338" stroke="#8a8a8a" stroke-width="1"/>
<!-- home -->
<g transform="translate(1316,180.500)"><path d="M3 8.600 V16.400 H14.400 V8.600" fill="#f6f6f6" stroke="#333" stroke-width="1.100"/><path d="M.6 9 L8.700 1.200 L16.800 9" fill="none" stroke="#1a5f90" stroke-width="2.600" stroke-linejoin="miter"/><path d="M.6 9 L8.700 1.200 L16.800 9" fill="none" stroke="#4aa0d4" stroke-width="1"/><rect x="7" y="10.400" width="4" height="6" fill="#cfcfcf" stroke="#333" stroke-width=".9"/></g>
<!-- library books -->
<g transform="translate(1318,204)" fill="#f4f4f4" stroke="#333" stroke-width="1" stroke-linejoin="round"><path d="M.8 4.600 L3.600 3 L6.600 4.600 V17.600 L3.600 16 L.8 17.600Z"/><path d="M3.600 3 V16" fill="none"/><path d="M5.800 3 L8.600 1.400 L11.600 3 V17 L8.600 15.400 L6.600 16.600 V4.600Z"/><path d="M8.600 1.400 V15.400" fill="none"/><path d="M10.800 1.600 L13.400 .4 L16.200 2 V15.600 L13.400 14 L11.600 15 V3Z"/><path d="M13.400 .4 V14" fill="none"/></g>
<!-- folder -->
<g transform="translate(1314.500,228.500)"><path d="M.8 16.400 V1.400 H7 L8.800 3.600 H18.600 V6.400" fill="#dcdcdc" stroke="#444" stroke-width="1.100"/><path d="M.8 16.400 L5 6.400 H22 L17.600 16.400Z" fill="#f6f6f6" stroke="#444" stroke-width="1.100"/></g>
<!-- design library -->
<g transform="translate(1316,252)"><rect x=".7" y=".7" width="17" height="17" rx="1.500" fill="#e8e8e8" stroke="#333" stroke-width="1.200"/><path d="M3 3 H11 V6 H8.600 V10.400 H11.600 V13.600 H3 V10.400 H5.600 V6 H3Z" fill="#f6c820" stroke="#7a5c00" stroke-width=".8"/><rect x="12.600" y="3" width="2.800" height="2.800" fill="#f6c820" stroke="#7a5c00" stroke-width=".7"/><rect x="13" y="8" width="2.400" height="6.600" fill="#6a9ab8" stroke="#333" stroke-width=".6"/></g>
<!-- appearances ball -->
<g clip-path="url(#ball3)"><rect x="1316" y="275" width="8.500" height="10.500" fill="#2f6fd0"/><rect x="1324.500" y="275" width="9" height="10.500" fill="#e03838"/><path d="M1316 285 L1324.500 284 L1329 293 H1316Z" fill="#2fae3e"/><path d="M1324.500 284 L1333 285.500 V293 H1328.500Z" fill="#e8c23a"/><circle cx="1321.500" cy="280" r="4.500" fill="#fff" opacity=".35"/></g>
<circle cx="1324.500" cy="284" r="8.300" fill="none" stroke="#555" stroke-width=".6"/>
<!-- custom properties -->
<g transform="translate(1316,299.500)"><rect x=".7" y=".7" width="17" height="17" fill="#f6f6f6" stroke="#1f4f78" stroke-width="1.200"/><rect x=".7" y=".7" width="17" height="3" fill="#3f8fc0"/><g fill="#3f8fc0" stroke="#1f4f78" stroke-width=".5"><rect x="2.600" y="5.600" width="3.400" height="2.400"/><rect x="2.600" y="9.600" width="3.400" height="2.400"/><rect x="2.600" y="13.600" width="3.400" height="2.400"/></g><path d="M7.600 6.800H15.600M7.600 10.800H15.600M7.600 14.800H15.600" stroke="#333" stroke-width="1"/></g>
<!-- triad -->
<g>
<path d="M315 886 L297.500 891.500" stroke="#2020c8" stroke-width="3.400"/><path d="M302 886.400 L293.800 891.800 L302.600 895Z" fill="#2020c8"/>
<path d="M315 886 L332 889.600" stroke="#c82020" stroke-width="3.200"/><path d="M328.800 885.400 L337.600 890.600 L328 893.800Z" fill="#d82a2a"/>
<path d="M315 886 V866" stroke="#1e7a1e" stroke-width="3.200"/><path d="M310.800 867.600 L315 856.600 L319.200 867.600Z" fill="#1e8a1e"/>
<circle cx="315" cy="886" r="2" fill="#22228a"/>
<text x="311.200" y="856.400" font-family="Liberation Sans" font-size="11.500" fill="#1e8a1e">Y</text>
<text x="336.800" y="896" font-family="Liberation Sans" font-size="11.500" fill="#e02020">X</text>
<text x="289.200" y="897" font-family="Liberation Sans" font-size="11.500" fill="#2020d8" font-style="italic">Z</text>
</g>
</svg>

<!-- leftpanel.html -->
<!-- left panel bg -->
<div class="a" style="left:8px;top:126px;width:267px;height:818px;background:#b3b3b3"></div>
<div class="vl" style="left:274px;top:148px;height:796px;background:#858585"></div>
<!-- command manager tabs -->
<div class="a" style="left:75px;top:125px;width:305px;height:23px;background:#a0a0a0;border:1px solid #858585"></div>
<div class="vl" style="left:131px;top:126px;height:21px;background:#858585"></div>
<div class="vl" style="left:187px;top:126px;height:21px;background:#858585"></div>
<div class="vl" style="left:247px;top:126px;height:21px;background:#858585"></div>
<div class="a" style="left:8px;top:125px;width:67px;height:2px;background:#b3b3b3"></div>
<!-- panel header strip -->
<div class="hl" style="left:8px;top:150px;width:266px;background:#8a8a8a"></div>
<div class="hl" style="left:8px;top:151px;width:266px;background:#c0c0c0"></div>
<div class="a" style="left:137px;top:155px;width:6px;height:6px;border-radius:3px;background:#d8d8d8;border:1px solid #9a9a9a"></div>
<div class="hl" style="left:8px;top:165px;width:266px;background:#8a8a8a"></div>
<div class="hl" style="left:8px;top:166px;width:266px;background:#c0c0c0"></div>
<!-- icon tabs -->
<div class="a" style="left:8px;top:170px;width:267px;height:26px;background:#a0a0a0;border-top:1px solid #8a8a8a;border-bottom:1px solid #8a8a8a"></div>
<div class="vl" style="left:47px;top:171px;height:24px;background:#858585"></div>
<div class="vl" style="left:87px;top:171px;height:24px;background:#858585"></div>
<div class="a" style="left:88px;top:170px;width:40px;height:26px;background:#b3b3b3"></div>
<div class="vl" style="left:127px;top:171px;height:24px;background:#858585"></div>
<div class="vl" style="left:167px;top:171px;height:24px;background:#858585"></div>
<div class="vl" style="left:207px;top:171px;height:24px;background:#858585"></div>
<div class="a" style="left:208px;top:170px;width:66px;height:25px;background:#b3b3b3"></div>
<div class="hl" style="left:8px;top:227px;width:266px;background:#8a8a8a"></div>
<!-- display states -->
<div class="a" style="left:274px;top:515px;width:9px;height:39px;background:#b3b3b3;border:1px solid #8a8a8a;border-left:0"></div>
<div class="a" style="left:275px;top:531px;width:5px;height:5px;border-radius:3px;background:#d8d8d8;border:1px solid #9a9a9a"></div>
<div class="hl" style="left:8px;top:514px;width:266px;background:#8a8a8a"></div>
<div class="hl" style="left:8px;top:537px;width:266px;background:#8a8a8a"></div>
<!-- context menu -->
<div class="a" style="left:144px;top:624px;width:217px;height:175px;background:#b3b3b3;border:1px solid #7a7a7a;box-shadow:inset 0 0 0 2px #f2f2f2"></div>
<div class="a" style="left:146px;top:675px;width:212px;height:24px;background:#c9c9c9;border:1px solid #6e6e6e"></div>
<div class="hl" style="left:178px;top:772px;width:180px;background:#cfcfcf"></div>

<!-- ribbon.html -->
<svg style="left:0;top:0" width="1346" height="126" viewBox="0 0 1346 126">
<!-- separators -->
<g fill="#c3c3c3"><rect x="501.5" y="45" width="1" height="78"/><rect x="580.5" y="45" width="1" height="78"/><rect x="701.5" y="45" width="1" height="78"/><rect x="752.5" y="45" width="1" height="78"/><rect x="813" y="45" width="1" height="78"/><rect x="924.5" y="45" width="1" height="78"/><rect x="987.5" y="45" width="1" height="78"/><rect x="1051.5" y="45" width="1" height="78"/></g>
<!-- edit component (disabled) -->
<g transform="translate(36.5,57.5)" fill="#c4c4c4" stroke="#a2a2a2" stroke-width=".9" stroke-linejoin="round"><path d="M1 6 L7 2.4 L14 5 L14 12 L8 16 L1 13Z"/><path d="M7 2.400 L7 9 L1 13M7 9 L14 12" fill="none"/><path d="M9 1.400 L13 .4 L17 2.400 L17 7 L13 9" /><path d="M16.200 7.200 L18.600 9.600 L9.600 17.600 L6 19.200 L7.600 15.400Z" fill="#cacaca"/></g>
<!-- insert components -->
<g transform="translate(110.5,51)"><path d="M1 17.600 V10 H5 L6.200 11.400 H12.600 V13" fill="#e8e8e8" stroke="#333" stroke-width="1"/><path d="M1 17.600 L4.400 12.600 H15.400 L12 17.600Z" fill="#f6f6f6" stroke="#333" stroke-width="1"/><path d="M2.600 9 C2.600 5 4.400 3.400 6.800 3.200 V1 L10.400 4.400 L6.800 7.600 V5.600 C5 5.800 4.600 7 4.600 9Z" fill="#2ea02e" stroke="#187a18" stroke-width=".5"/><path d="M9.400 5.200 L14.400 2.400 L19.200 4.200 V8.600 L14.600 11.200 L9.400 8.800Z" fill="#f0c020" stroke="#7a5c00" stroke-width=".8"/><path d="M12.400 2.800 L15.400 .8 L18.800 1.800 V5.600 L15.600 7.400 L12.400 6.200Z" fill="#3b98cf" stroke="#1a4f78" stroke-width=".8"/><path d="M15.600 3.200 V7.200M12.400 2.800 L15.600 3.600 L18.800 1.800" fill="none" stroke="#d6ecf8" stroke-width=".7"/></g>
<!-- mate paperclip -->
<g transform="translate(167,57.500)" fill="none" stroke-linecap="round"><path d="M13.500 9.500 L6 2.400 C3.600 .4 .6 3.200 2.800 5.800 L11.600 15.600 C14.200 18.400 18.200 15 15.600 12.200 L8.200 4.800 C7 3.600 5.400 5 6.600 6.400 L12.200 12.600" stroke="#2e2e2e" stroke-width="3"/><path d="M13.500 9.500 L6 2.400 C3.600 .4 .6 3.200 2.800 5.800 L11.600 15.600 C14.200 18.400 18.200 15 15.600 12.200 L8.200 4.800 C7 3.600 5.400 5 6.600 6.400 L12.200 12.600" stroke="#efefef" stroke-width="1.200"/></g>
<!-- component preview window (disabled) -->
<g transform="translate(220,57.800)" fill="#bcbcbc" stroke="#a0a0a0" stroke-width="1"><rect x=".5" y=".5" width="17.200" height="17.400"/><path d="M.5 3.800H17.700" fill="none"/><path d="M4 9 L8 6.600 L10 8 V10.400 L13.600 11.600 V14.600 L9.400 16.200 L4 13.600Z" fill="#c8c8c8"/></g>
<!-- linear pattern -->
<g transform="translate(309,51)" stroke="#2e2e2e" stroke-width="1.100"><path d="M.8 .8 H4.600 V3.200 H7.200 V7.400 H.8Z" fill="#f6d030"/><rect x="3.800" y="5" width="2" height="1.400" fill="#2b7fb8" stroke="none"/><path d="M9.800 .8 H13.600 V3.200 H16.200 V7.400 H9.800Z" fill="#f6f6f6"/><path d="M.8 9.800 H4.600 V12.200 H7.200 V16.400 H.8Z" fill="#f6f6f6"/><path d="M9.800 9.800 H13.600 V12.200 H16.200 V16.400 H9.800Z" fill="#f6f6f6"/></g>
<!-- smart fasteners -->
<g transform="translate(389.500,58.700)"><path d="M.7 16.600 V2.600 Q.7 1.400 1.900 1.400 H6.600 L8.400 3.600 H16.600 Q17.800 3.600 17.800 4.800 V15.400 Q17.800 16.600 16.600 16.600Z" fill="#ececec" stroke="#3a3a3a" stroke-width="1.200"/><path d="M3.400 9.800 H6 V8.600 H13.800 V13 H6 V11.800 H3.400Z" fill="#d8d8d8" stroke="#3a3a3a" stroke-width=".9"/><path d="M12.400 .2 L18 -.6 L13.400 4 L15.800 4 L7 11.800 L10 6.200 L7.800 6.200Z" fill="#f39a1e" stroke="#c45a10" stroke-width=".6"/></g>
<!-- move component -->
<g transform="translate(454.400,51.500)"><path d="M9.600 1.800 L14.600 .6 L18.800 2.400 V9.800 L14.400 12.400 L9.600 10.400Z" fill="#f0c020" stroke="#7a5c00" stroke-width=".9"/><path d="M.8 4.800 L6.400 2.400 L11.600 4.600 V13.200 L6 16 L.8 13.400Z" fill="#f4f4f4" stroke="#333" stroke-width="1.100"/><path d="M.8 4.800 L6 7.200 L11.600 4.600M6 7.200 V16" fill="none" stroke="#8a8a8a" stroke-width=".8"/><path d="M7.600 9.200 H14 V7 L18 9.800 L14 12.800 V10.600 H7.600Z" fill="#1c1c1c"/></g>
<!-- show hidden components -->
<g transform="translate(532,57)"><path d="M3 4.800 C4.600 1 9.400 .8 11 3.400" fill="none" stroke="#1c1c1c" stroke-width="1.500"/><path d="M.8 4 L5 4.200 L2.600 7.800Z" fill="#1c1c1c"/><path d="M10.600 7 L13.200 5.400 L15.200 6.400 L17 5.400 L18 8 V14.400 L14.400 16.400 L10.600 14.600Z" fill="#f4f4f4" stroke="#444" stroke-width=".9"/><path d="M1.400 11 L4.600 9.200 L6.400 10 V7.800 L9.600 6.400 L12 7.600 V12 L13 12.600 V16.200 L8.400 18.800 L1.400 15Z" fill="#f0c020" stroke="#7a5c00" stroke-width=".9"/></g>
<!-- assembly features -->
<g transform="translate(601.700,50.800)"><path d="M.8 4.200 L8.600 .8 L17 3.400 V14 L9 18 L.8 14.800Z" fill="#f6d030" stroke="#3a3a10" stroke-width="1"/><path d="M.8 9 L9 12 L17 8.800 V14 L9 18 L.8 14.800Z" fill="#34c034" stroke="#146014" stroke-width=".9"/><path d="M4.600 4.600 Q8.800 2.200 13 4.600 V6.800 H11 V15 L9 16.400 L6.800 15 V6.800 H4.600Z" fill="#f2f2f2" stroke="#555" stroke-width=".8"/></g>
<!-- reference geometry -->
<g transform="translate(659.500,51)"><circle cx="3.600" cy="3.200" r="2.500" fill="#5ab0e0" stroke="#1a4f78" stroke-width=".9"/><path d="M7 5.600 L18.600 1.200 V13.600 L7 17.800Z" fill="#4aa4d8" stroke="#1a5f90" stroke-width=".9"/><path d="M13 .2 V18.400" stroke="#111" stroke-width="1" stroke-dasharray="2.400 1.400"/></g>
<!-- new motion study -->
<g transform="translate(717.500,57.500)"><g transform="translate(13.400,6.600)"><circle r="5.200" fill="none" stroke="#444" stroke-width="2.600" stroke-dasharray="2.300 1.780"/><circle r="4.700" fill="#f4f4f4" stroke="#555" stroke-width=".8"/><circle r="1.800" fill="#b3b3b3" stroke="#555" stroke-width=".7"/></g><g transform="translate(6,13.800)"><circle r="4.200" fill="none" stroke="#555" stroke-width="2.200" stroke-dasharray="1.900 1.400"/><circle r="3.700" fill="#9a9a9a" stroke="#555" stroke-width=".7"/><circle r="1.400" fill="#d0d0d0" stroke="#555" stroke-width=".6"/></g><path d="M3.800 .2 V7.800M0 4H7.600M1.200 1.400L6.400 6.600M6.400 1.400L1.200 6.600" stroke="#f07818" stroke-width="1.100"/><circle cx="3.800" cy="4" r="1.300" fill="#fff3b0"/></g>
<!-- BOM -->
<g transform="translate(773,57.800)"><rect x=".6" y=".6" width="12.200" height="11.400" fill="#f6f6f6" stroke="#333" stroke-width="1"/><rect x=".6" y=".6" width="12.200" height="2.600" fill="#2b7fb8" stroke="#1a4f78" stroke-width=".8"/><path d="M.6 6H12.800M.6 9H12.800M4.600 3.200V12M8.600 3.200V12" stroke="#555" stroke-width=".7"/><path d="M6.600 10.400 L10.400 8.200 L13 9.200 V7 L16.200 5.800 L18.400 7 V14.400 L12.800 17.800 L6.600 13.800Z" fill="#f0c020" stroke="#7a5c00" stroke-width=".9"/><path d="M11.400 7.600 L14.600 6 L17.600 7.200 V11 L14.600 12.600 L11.400 11.200Z" fill="#3b98cf" stroke="#1a4f78" stroke-width=".8"/><path d="M11.400 7.600 L14.600 8.800 L17.600 7.200M14.600 8.800V12.600" fill="none" stroke="#cfe7f5" stroke-width=".7"/></g>
<!-- exploded view -->
<g transform="translate(833.700,57.400)"><path d="M.6 10.600 L3.800 8.800 L5.600 9.600 V7.800 L8.600 6.600 L10.600 7.600 V11.600 L11.800 12.200 V15.200 L7.400 17.800 L.6 14Z" fill="#f0c020" stroke="#7a5c00" stroke-width=".9"/><path d="M11.400 1.600 L14.800 .4 L18 1.600 V5.200 L14.800 6.800 L11.400 5.400Z" fill="#3b98cf" stroke="#1a4f78" stroke-width=".8"/><path d="M11.400 1.600 L14.800 2.800 L18 1.600M14.800 2.800V6.800" fill="none" stroke="#cfe7f5" stroke-width=".6"/><path d="M14.800 7 V11.400 H8" fill="none" stroke="#111" stroke-width="1" stroke-dasharray="2 1.200"/></g>
<!-- explode line sketch -->
<g transform="translate(887,57.400)"><path d="M.6 10.600 L3.800 8.800 L5.600 9.600 V7.800 L8.600 6.600 L10.600 7.600 V11.600 L11.800 12.200 V15.200 L7.400 17.800 L.6 14Z" fill="#f2f2f2" stroke="#444" stroke-width=".9"/><path d="M12.400 1.600 L15.600 .4 L18.800 1.600 V5 L15.600 6.400 L12.400 5.200Z" fill="#f2f2f2" stroke="#444" stroke-width=".8"/><path d="M15.600 7 V10.800M11 8 L16.800 10.400M10 10.800 L13 12" fill="none" stroke="#2b7fb8" stroke-width="1.100" stroke-dasharray="2 1.300"/></g>
<!-- instant3D -->
<g transform="translate(946,57.500)"><path d="M4.600 .4 L19.600 7.400 L18.400 12.400 L3.400 5.400Z" fill="#f6d648" stroke="#a88a10" stroke-width=".7"/><path d="M7.400 1.800 L6.800 4.200M10.200 3.200 L9.400 6.400M13 4.400 L12.400 6.800M15.800 5.800 L15 9M18 6.800 L17.600 8.600" stroke="#6a5200" stroke-width=".8"/><path d="M.6 7.800 L13.400 13.800 L14.200 11.800 L19.600 18.200 L11 18.400 L12.200 16.400 L-.2 10.400Z" fill="#2b7fb8" stroke="#1a5f90" stroke-width=".5"/></g>
<!-- update speedpak -->
<g transform="translate(1009.300,57.800)"><path d="M3.600 1.400 H8.600M3 3H7.600M3.200 4.600H6.800" stroke="#555" stroke-width=".8"/><path d="M5 4.800 L11.800 1 L19.200 3.800 V13.800 L12.400 17.800 L5 14.600Z" fill="#f2f2f2" stroke="#3a3a3a" stroke-width="1"/><path d="M12.400 9.800 L19.200 6.400 V13.800 L12.400 17.800Z" fill="#f6d648" stroke="#3a3a3a" stroke-width=".8"/><path d="M8.600 3 L11.800 1 L19.200 3.800 V6.400 L12.400 9.800 L8.600 8Z" fill="#3b98cf" stroke="#1a4f78" stroke-width=".8"/><path d="M8.600 3 L12.400 5 V9.800M12.400 5 L19.200 3.800" fill="none" stroke="#cfe7f5" stroke-width=".7"/><path d="M5.200 8.400 L10.200 17.800 H.2Z" fill="#fcd21c" stroke="#d04a10" stroke-width="1" stroke-linejoin="round"/><path d="M5.200 11.400V14.600M5.200 15.600V16.800" stroke="#111" stroke-width="1.300"/></g>
<!-- camera -->
<g transform="translate(1073,58.700)"><path d="M1.800 3 H3 L4 1 H7 L8 3 H11.600 L12.600 .8 H15.600 L16.800 3 Q17.800 3 17.800 4.200 V13.400 Q17.800 14.600 16.600 14.600 H1.800 Q.6 14.600 .6 13.400 V4.200 Q.6 3 1.800 3Z" fill="#f0f0f0" stroke="#2e2e2e" stroke-width="1.100"/><circle cx="9.600" cy="8.600" r="4.600" fill="#d6d6d6" stroke="#2e2e2e" stroke-width="1"/><circle cx="9.600" cy="8.600" r="2.700" fill="#4a4a4a"/><circle cx="8.800" cy="7.800" r=".9" fill="#cfcfcf"/></g>
<!-- asset publisher -->
<g transform="translate(1131.400,57)"><path d="M.8 4.600 L8.400 .8 L18.200 4.600 L10.400 9Z" fill="#efefef" stroke="#2080b8" stroke-width="1.100"/><path d="M4 3 L13.600 7.200M7.200 1.400 L16.400 5.600" stroke="#2b8ac4" stroke-width="1.200"/><path d="M1.600 5.400 V13.400M4.600 6.800 V17.600M9.800 9.400 V18.600M13.200 7.800 V15.400M16.800 5.600 V12" stroke="#2080b8" stroke-width="1.800"/><path d="M.8 4.600 L10.400 9 L18.200 4.600" fill="none" stroke="#1a6ea2" stroke-width="1.400"/></g>
</svg>
<div class="dd" style="left:117px;top:111px"></div><div class="dd" style="left:315px;top:111px"></div><div class="dd" style="left:462px;top:111px"></div><div class="dd" style="left:608px;top:111px"></div><div class="dd" style="left:667px;top:111px"></div>

<!-- topbar.html -->
<!-- logo box -->
<div class="a" style="left:19px;top:8px;width:144px;height:34px;background:linear-gradient(175deg,#ffffff 35%,#dcdcdc 100%);border:1px solid #f4f4f4;border-top:0;box-shadow:0 1px 0 #8a8a8a"></div>
<svg style="left:0;top:0" width="1346" height="50" viewBox="0 0 1346 50">
<!-- DS logo -->
<g fill="none" stroke="#d9281c" stroke-linecap="round" stroke-linejoin="round">
<path d="M33.700 10.200 Q40 8.600 43.400 10.600 Q45.600 12.600 42.600 15.600 L37 20.400" stroke-width="1.900"/>
<path d="M37 20.400 L30 29 L24.600 35.200" stroke-width="1.300"/>
<path d="M24.600 35.200 Q31 34 36 30.800 Q40.200 27.400 38.600 23.200 Q38 21.400 36.800 20.800 L27.800 22.700" stroke-width="1.400"/>
<path d="M51.800 19 Q47 18.800 44.600 20.200 Q41.400 22.400 43.800 25 Q46 26.800 48.600 28.400 Q51.200 30.400 48.200 32 Q45 33 39.600 32.300" stroke-width="2.500"/>
</g>
<text x="56.8" y="33" font-family="Liberation Sans" font-weight="bold" font-style="italic" font-size="15.5" fill="#d9281c" textLength="49" lengthAdjust="spacingAndGlyphs">SOLID</text>
<text x="105.5" y="33" font-family="Liberation Sans" font-style="italic" font-size="15.5" fill="#d9281c" textLength="52" lengthAdjust="spacingAndGlyphs">WORKS</text>
<!-- pin -->
<g transform="translate(499.5,17)"><path d="M1 13 L5 8.5" stroke="#2b7fb8" stroke-width="1.6"/><path d="M3.2 5.2 L8.2 10.2 L9.4 7.8 L12.6 4.6 L9 1 L5.8 4.2 Z" fill="#2f86c0" stroke="#1f6aa0" stroke-width=".6"/></g>
<!-- separator -->
<rect x="521" y="9" width="1" height="29" fill="#8a8a8a"/><rect x="522" y="9" width="1" height="29" fill="#c6c6c6"/>
<!-- new doc -->
<g transform="translate(541,14.5)"><path d="M1.5 .8 H9 L13.2 5 V16.6 Q13.2 17.4 12.4 17.4 H1.5 Q.7 17.4 .7 16.6 V1.6 Q.7 .8 1.5 .8Z" fill="#f6f6f6" stroke="#3c3c3c" stroke-width="1.1"/><path d="M9 .8 V5 H13.2" fill="#d8d8d8" stroke="#3c3c3c" stroke-width=".9"/></g>
<!-- open -->
<g transform="translate(577,14)"><path d="M.8 18 V3.6 H6.2 L8 5.6 H16 V8.2" fill="#e9e9e9" stroke="#3c3c3c" stroke-width="1.1"/><path d="M.8 18 L5.4 8.2 H19.6 L15.2 18 Z" fill="#f4f4f4" stroke="#3c3c3c" stroke-width="1.1"/><path d="M7 1.2 C11.5 .6 13.4 3.6 13.2 7 H16 L11.8 12 L7.4 7 H10.2 C10.2 4.6 9.4 3 7 1.2Z" fill="#2ea02e" stroke="#187a18" stroke-width=".7"/></g>
<!-- save -->
<g transform="translate(617,14.5)"><path d="M1.6 .7 H16 Q17.4 .7 17.4 2.1 V16 Q17.4 17.4 16 17.4 H3 L.7 15.2 V1.6 Q.7 .7 1.6 .7Z" fill="#3590c4" stroke="#1a4f78" stroke-width="1.2"/><rect x="3.6" y="1.3" width="11" height="8.2" fill="#f3f3f3" stroke="#6a7f8e" stroke-width=".5"/><path d="M5 3.4H13.2M5 5.4H13.2M5 7.4H13.2" stroke="#7a7a7a" stroke-width=".8"/><rect x="5" y="11.6" width="8.6" height="5.8" fill="#3a3a3a"/><rect x="6.6" y="12.4" width="2.2" height="4.6" fill="#cfd8de"/></g>
<!-- print -->
<g transform="translate(656,14.5)"><rect x="4" y=".7" width="10" height="7" fill="#f2f2f2" stroke="#4a4a4a" stroke-width="1"/><rect x=".7" y="7" width="16.8" height="7.4" rx="1.6" fill="#3b98cf" stroke="#1e5d8c" stroke-width="1.1"/><rect x="2.5" y="9" width="13" height="1.6" fill="#cfe7f5"/><rect x="3.2" y="12.6" width="11.6" height="4.4" fill="#f5f5f5" stroke="#4a4a4a" stroke-width="1"/></g>
<!-- undo -->
<g transform="translate(695,15.500)"><path d="M0 .6 L4.200 3.400 Q10 .4 15 2.600 Q20.500 7 15.500 16.300 Q14.200 11.500 12 9.200 Q10 7.200 7.200 7.600 L8.800 10 L.2 9.200Z" fill="#3b98cf" stroke="#1e5d8c" stroke-width="1.100" stroke-linejoin="round"/><path d="M5 4.600 Q10 2 14.500 4" fill="none" stroke="#8fcaec" stroke-width="1"/></g>
<!-- select button -->
<rect x="731.5" y="11.5" width="25" height="25" fill="#8c8c8c" stroke="#6e6e6e"/><rect x="756.5" y="11.5" width="13" height="25" fill="#b3b3b3" stroke="#7c7c7c"/>
<path d="M737.7 14.6 V29.2 L741.2 26 L743.8 31.8 L746.4 30.6 L743.8 25 H748.6 Z" fill="#fff" stroke="#2a2a2a" stroke-width="1.1" stroke-linejoin="round"/>
<!-- traffic light -->
<rect x="777.6" y="14.3" width="11" height="19.6" rx="5.5" fill="#2c2c2c" stroke="#e6e6e6" stroke-width="1.1"/><circle cx="783.1" cy="19.8" r="3.2" fill="#e0201a"/><circle cx="783.1" cy="28.2" r="3.2" fill="#1f9a1f"/><circle cx="782.6" cy="19.2" r="1" fill="#f9a5a0"/><circle cx="782.6" cy="27.6" r="1" fill="#9fe39f"/>
<!-- options list -->
<g transform="translate(801,15)"><rect x=".7" y=".7" width="14.6" height="16.2" rx="1" fill="#f4f4f4" stroke="#333" stroke-width="1.2"/><g fill="#3590c4" stroke="#1a4f78" stroke-width=".6"><rect x="2.6" y="2.6" width="3.6" height="2.8"/><rect x="2.6" y="7.4" width="3.6" height="2.8"/><rect x="2.6" y="12.2" width="3.6" height="2.8"/></g><path d="M7.8 4H13.4M7.8 8.8H13.4M7.8 13.6H13.4" stroke="#333" stroke-width="1"/></g>
<!-- gear -->
<g transform="translate(833.800,23.600) scale(.8)"><path d="M-1.5 -8 h3 l.6 2 l1.7 .7 l1.9 -1 l2.1 2.1 l-1 1.9 l.7 1.7 l2 .6 v3 l-2 .6 l-.7 1.7 l1 1.9 l-2.1 2.1 l-1.9 -1 l-1.7 .7 l-.6 2 h-3 l-.6 -2 l-1.7 -.7 l-1.9 1 l-2.1 -2.1 l1 -1.9 l-.7 -1.7 l-2 -.6 v-3 l2 -.6 l.7 -1.7 l-1 -1.9 l2.1 -2.1 l1.9 1 l1.7 -.7 z" fill="#f4f4f4" stroke="#3a3a3a" stroke-width="1"/><circle r="3.200" fill="#b3b3b3" stroke="#3a3a3a" stroke-width="1.200"/></g>
<!-- person -->
<g transform="translate(864,14.5)"><path d="M.4 18.8 C.4 12.8 3 11.4 7.6 11 C12.4 11.4 15 12.8 15 18.8 Z" fill="#3cb43c" stroke="#1d8a1d" stroke-width=".8"/><path d="M6 11.5 L7.7 15.5 L9.4 11.5Z" fill="#2a7f9a"/><ellipse cx="7.8" cy="6.6" rx="4.2" ry="5" fill="#e8b878"/><path d="M3.2 6.4 C2.6 1.6 6 .2 8.4 .6 C12 .6 13.2 3.6 12.2 6.8 C11.6 4.6 10.6 3.6 8.8 3.4 C6.2 3.4 4.4 4.2 3.2 6.4Z" fill="#a9843a"/><path d="M14.2 .6 L20 4.8 L14.2 9.2Z" fill="#24a824" stroke="#1a1a1a" stroke-width=".9"/></g>
<!-- doc red arrow -->
<g transform="translate(892,15.5)"><path d="M.7 4 H4 V1.6 H14.4 V15.6 H.7Z" fill="#f0f0f0" stroke="#444" stroke-width="1.1"/><path d="M3.4 4.4 L8 .2 L8.6 2.6 C11.6 3 12.4 6 11.6 9 C10.8 6.4 9.6 5.8 8 5.8 L8.2 8.2Z" fill="#d8202a"/></g>
<!-- search box -->
<rect x="990" y="13" width="200" height="21" fill="#fafafa"/><rect x="1014" y="14" width="139" height="19" fill="#e4e6ec"/>
<rect x="995.5" y="15" width="14.5" height="14.5" fill="#fff" stroke="#1c1c1c" stroke-width="1.4"/><rect x="997" y="16.5" width="11.5" height="11.5" fill="#262626"/><path d="M998.8 19 L1002.6 22 L998.8 25" fill="none" stroke="#fff" stroke-width="1.2"/><path d="M1003 26H1007" stroke="#fff" stroke-width="1.1"/>
<circle cx="1165.4" cy="21.3" r="6.2" fill="none" stroke="#7a7a7a" stroke-width="1.7"/><path d="M1169.8 25.8 L1175 31" stroke="#7a7a7a" stroke-width="2.2" stroke-linecap="round"/>
<!-- help -->
<text x="1201.5" y="31" font-family="Liberation Sans" font-weight="bold" font-size="19" fill="#2a2a2a">?</text>
<!-- window buttons -->
<rect x="1241.7" y="26.5" width="10.6" height="3.6" fill="#2a2a2a"/>
<g transform="translate(1265,16.8)" fill="none" stroke="#2a2a2a"><rect x=".6" y=".6" width="16" height="13.2" stroke-width="1.2"/><path d="M.6 1.4H16.6" stroke-width="1.8"/><path d="M8.6 1V14" stroke-width="1"/><path d="M2.6 7.6H14.6M5 5.2L2.6 7.6L5 10M12.2 5.2L14.6 7.6L12.2 10" stroke-width="1.1"/></g>
<rect x="1292.3" y="18.5" width="13.6" height="11.2" fill="none" stroke="#2a2a2a" stroke-width="1.3"/><rect x="1292" y="17.8" width="14.2" height="2.6" fill="#2a2a2a"/>
<path d="M1320.2 19.2L1329.8 28.8M1329.8 19.2L1320.2 28.8" stroke="#2a2a2a" stroke-width="1.6"/>
</svg>
<div class="dd" style="left:565px;top:22px"></div><div class="dd" style="left:604px;top:22px"></div><div class="dd" style="left:643px;top:22px"></div><div class="dd" style="left:682px;top:22px"></div><div class="dd" style="left:721px;top:22px"></div><div class="dd" style="left:760px;top:22px"></div><div class="dd" style="left:851px;top:22px"></div><div class="dd" style="left:1182px;top:23px"></div><div class="dd" style="left:1224px;top:22px"></div>

<!-- bottom.html -->
<svg style="left:0;top:0" width="1346" height="986" viewBox="0 0 1346 986">
<defs><clipPath id="ball4"><circle cx="188" cy="182.500" r="8.600"/></clipPath>
<radialGradient id="gsph" cx=".35" cy=".3" r=".8"><stop offset="0" stop-color="#fff"/><stop offset=".6" stop-color="#d0d0d0"/><stop offset="1" stop-color="#8a8a8a"/></radialGradient></defs>
<!-- panel tab icons -->
<g id="asmico" transform="translate(20,173.500)"><path d="M.8 8.200 L4.800 6 L4.800 3 L10 .8 L16.600 3.400 V13 L9 18.200 L.8 13.200Z" fill="#f6cf2c" stroke="#7a5c00" stroke-width="1"/><path d="M.8 8.200 L9 12 L16.600 8M9 12 V18.200" fill="none" stroke="#a8860a" stroke-width=".8"/><path d="M8 4.600 L12.400 2.600 L17.200 4.400 V9.600 L12.800 12 L8 10Z" fill="#7cc4e8" stroke="#1f5f8a" stroke-width="1"/><path d="M8 4.600 L12.800 6.400 L17.200 4.400M12.800 6.400 V12" fill="none" stroke="#1f5f8a" stroke-width=".8"/></g>
<g transform="translate(59.400,174)"><rect x=".7" y=".7" width="16.400" height="16.400" rx="1.200" fill="#f6f6f6" stroke="#1f4f78" stroke-width="1.200"/><rect x=".7" y=".7" width="16.400" height="3" fill="#3f8fc0" stroke="#1f4f78" stroke-width=".8"/><g fill="#3f8fc0" stroke="#1f4f78" stroke-width=".5"><rect x="2.600" y="5.600" width="3.400" height="2.400"/><rect x="2.600" y="9.600" width="3.400" height="2.400"/><rect x="2.600" y="13.400" width="3.400" height="2.400"/></g><path d="M7.600 6.800H15M7.600 10.800H15M7.600 14.600H15" stroke="#333" stroke-width="1"/></g>
<g transform="translate(101,174)" fill="#f6f6f6" stroke="#2e2e2e" stroke-width="1.100"><path d="M.7 .7 H3.300 V17.300 H.7Z"/><path d="M3.300 3.400 H6.400 M3.300 12.600 H8"/><rect x="6.400" y="1" width="5.200" height="5" rx=".8"/><rect x="8" y="10" width="5.600" height="5.400" rx=".8"/></g>
<g transform="translate(148.100,183.100)" fill="none" stroke="#141414"><circle r="6" stroke-width="2"/><path d="M0 -9V9M-9 0H9" stroke-width="1.800"/></g>
<g clip-path="url(#ball4)"><rect x="179" y="173" width="9" height="10" fill="#3a6fd0"/><rect x="188" y="173" width="10" height="10" fill="#d83030"/><path d="M179 183 L188 182.500 L192 192 H179Z" fill="#e8c028"/><path d="M188 182.500 L197 183 V192 H191Z" fill="#36a83c"/><path d="M188 182.500 L193 174 L197.500 180Z" fill="#2a2020"/><circle cx="185" cy="178.500" r="4.500" fill="#fff" opacity=".3"/></g>
<!-- red arrow -->
<path d="M120 177.400 L138 167.200 L139 172 L269.200 159.200 L269.700 164 L139.700 177.400 L140.500 185.600Z" fill="#f00a0a"/>
<!-- tree -->
<path d="M12.900 247 h7.200 l-3.600 3.800z M35.800 269.200 h7.200 l-3.600 3.800z" fill="#666"/>
<path d="M61 289 l4.200 3.600 l-4.200 3.600z" fill="#555"/>
<use href="#asmico" transform="translate(12.800,71.700) scale(.97)"/>
<g transform="translate(55,263.200)"><path d="M.7 .7 H9.600 V3.400 H6.800 V13.400 H9 V16.200 H3 V3.400 H.7Z" fill="#f2f2f2" stroke="#2e2e2e" stroke-width="1.200"/><rect x="9.400" y=".7" width="5.400" height="5.200" rx="1" fill="#f2f2f2" stroke="#2e2e2e" stroke-width="1.100"/><rect x="11" y="2.400" width="4.800" height="4.400" rx=".8" fill="#fafafa" stroke="#555" stroke-width=".8"/><path d="M10.400 15.600 h1.600 M13 15.600 h1.600 M15.600 15.600 h1.600" stroke="#111" stroke-width="1.600"/></g>
<path d="M78.600 270.600 L81.400 267.600 L85.600 272.400 L95.200 262.400 L97.800 265 L85.400 278Z" fill="#3fa024" stroke="#2a7a16" stroke-width=".5"/>
<g transform="translate(78,284)" fill="#c2c2c2" stroke="#9a9a9a" stroke-width=".9"><path d="M.6 10 L4 8 L5.800 8.800 V7 L8.800 5.800 L11 7 V11 L12 11.600 V14.600 L7.600 17.600 L.6 13.600Z"/><path d="M12 1.400 L15 .4 L18 1.400 V4.400 L15 5.800 L12 4.600Z"/><path d="M15 6 V10 H9" fill="none" stroke-dasharray="1.800 1.200"/></g>
<!-- display state icon -->
<circle cx="40" cy="549" r="7.600" fill="url(#gsph)" stroke="#6a6a6a" stroke-width=".9"/>
<path d="M33 545.500 Q40 538.500 47.500 545" fill="none" stroke="#1f5f8a" stroke-width="1.400"/>
<path d="M44.400 551.800 h5.400 M48 550 l2 1.800 l-2 1.800 M50.400 555.600 h-5.400 M46.800 553.800 l-2 1.800 l2 1.800" fill="none" stroke="#2b7fb8" stroke-width="1.200"/>
<!-- context menu icon -->
<path d="M154.200 630.600 V638.600 M150.200 634.600 H158.200 M151.400 631.800 L157 637.400 M157 631.800 L151.400 637.400" stroke="#f08018" stroke-width="1.100"/><circle cx="154.200" cy="634.600" r="1.300" fill="#ffe9a8"/>
<path d="M157.500 638 V647.500 M157.500 643 H164" stroke="#222" stroke-width="1.200" fill="none"/><rect x="164" y="640.600" width="4.800" height="4.800" fill="#3f8fc0" stroke="#1f4f78" stroke-width=".8"/>
<!-- bottom nav -->
<g fill="none" stroke="#8a8a8a" stroke-width="1"><path d="M35.500 945.500 H99.500"/><path d="M35.500 946 V958.500 M51.500 946V958.500 M67.500 946V958.500 M83.500 946V958.500 M99.500 946V958.500" /></g>
<g fill="#8e8e8e"><path d="M40 947.500 h1.400 v9 h-1.400z M47.600 947.500 v9 l-5.600 -4.500z M62.600 947.500 v9 l-5.600 -4.500z M72.600 947.500 v9 l5.600 -4.500z M87.400 947.500 v9 l5.600 -4.500z M93.600 947.500 h1.400 v9 h-1.400z"/></g>
<!-- bottom tabs -->
<rect x="156.500" y="944.500" width="176" height="15" fill="#a0a0a0" stroke="#7e7e7e"/><path d="M224.500 945 V959" stroke="#7e7e7e"/>
<!-- status bar separators -->
<g fill="#d0d0d0"><rect x="1016" y="963" width="1" height="13"/><rect x="1024" y="963" width="1" height="13"/><rect x="1125" y="963" width="1" height="13"/><rect x="1141" y="963" width="1" height="13"/></g>
<path d="M1227.500 971 h6 l-3 -3.400z" fill="#3a3a3a"/>
<g transform="translate(1300,963)"><path d="M1 5 L6.600 .8 L15.600 6 L10 12.600 L1.400 8.200Z" fill="#f4f4f4" stroke="#333" stroke-width="1"/><path d="M1.400 8.200 L10 12.600 L15.600 6" fill="none" stroke="#333" stroke-width="1"/><ellipse cx="7.600" cy="4.600" rx="2.600" ry="1.800" fill="none" stroke="#333" stroke-width=".9"/><path d="M8.600 8 L12.600 5.600" stroke="#333" stroke-width="1"/></g>
<g fill="#c8c8c8"><rect x="1333" y="969" width="2" height="2"/><rect x="1333" y="973" width="2" height="2"/><rect x="1329" y="973" width="2" height="2"/><rect x="1325" y="973" width="2" height="2"/><rect x="1329" y="969" width="2" height="2"/><rect x="1333" y="965" width="2" height="2"/></g>
</svg>

<!-- texts -->
<div class="t" style="left:191.2px;top:18.3px;letter-spacing:-0.61px;">File</div>
<div class="t" style="left:225.2px;top:18.3px;letter-spacing:-0.40px;">Edit</div>
<div class="t" style="left:260.7px;top:18.3px;letter-spacing:-0.43px;">View</div>
<div class="t" style="left:301.7px;top:18.3px;letter-spacing:-0.30px;">Insert</div>
<div class="t" style="left:346.2px;top:18.3px;letter-spacing:-0.50px;">Tools</div>
<div class="t" style="left:388.7px;top:18.3px;letter-spacing:0.16px;">Window</div>
<div class="t" style="left:449.2px;top:18.3px;letter-spacing:-0.56px;">Help</div>
<div class="t" style="left:918.7px;top:18.3px;letter-spacing:-0.64px;">450 Pro FB...</div>
<div class="t" style="left:1015.7px;top:18.3px;letter-spacing:-0.62px;color:#555;">Search Commands</div>
<div class="t" style="left:35.9px;top:78.3px;letter-spacing:-0.46px;color:#8a8a8a;">Edit</div>
<div class="t" style="left:16.4px;top:91.3px;letter-spacing:-0.26px;color:#8a8a8a;">Component</div>
<div class="t" style="left:105.2px;top:71.3px;letter-spacing:-0.36px;">Insert</div>
<div class="t" style="left:87.2px;top:84.3px;letter-spacing:-0.28px;">Components</div>
<div class="t" style="left:163.4px;top:78.3px;letter-spacing:-0.63px;">Mate</div>
<div class="t" style="left:199.7px;top:78.3px;letter-spacing:-0.26px;color:#8a8a8a;">Component</div>
<div class="t" style="left:210.2px;top:91.3px;letter-spacing:-0.70px;color:#8a8a8a;">Preview</div>
<div class="t" style="left:207.2px;top:104.3px;letter-spacing:0.16px;color:#8a8a8a;">Window</div>
<div class="t" style="left:270.2px;top:71.3px;letter-spacing:-0.28px;">Linear Component</div>
<div class="t" style="left:299.4px;top:84.3px;letter-spacing:-0.40px;">Pattern</div>
<div class="t" style="left:385.2px;top:78.3px;letter-spacing:-0.88px;">Smart</div>
<div class="t" style="left:375.2px;top:91.3px;letter-spacing:-0.64px;">Fasteners</div>
<div class="t" style="left:450.4px;top:71.3px;letter-spacing:-0.68px;">Move</div>
<div class="t" style="left:434.2px;top:84.3px;letter-spacing:-0.19px;">Component</div>
<div class="t" style="left:526.7px;top:78.3px;letter-spacing:-0.68px;">Show</div>
<div class="t" style="left:522.2px;top:91.3px;letter-spacing:-0.11px;">Hidden</div>
<div class="t" style="left:508.4px;top:104.3px;letter-spacing:-0.34px;">Components</div>
<div class="t" style="left:587.2px;top:71.3px;letter-spacing:-0.72px;">Assembly</div>
<div class="t" style="left:588.4px;top:84.3px;letter-spacing:-0.58px;">Features</div>
<div class="t" style="left:644.2px;top:71.3px;letter-spacing:-0.61px;">Reference</div>
<div class="t" style="left:645.2px;top:84.3px;letter-spacing:-0.53px;">Geometry</div>
<div class="t" style="left:715.4px;top:78.3px;letter-spacing:-0.86px;">New</div>
<div class="t" style="left:708.4px;top:91.3px;letter-spacing:0.19px;">Motion</div>
<div class="t" style="left:712.2px;top:104.3px;letter-spacing:-0.55px;">Study</div>
<div class="t" style="left:767.2px;top:78.3px;letter-spacing:0.03px;">Bill of</div>
<div class="t" style="left:759.7px;top:91.3px;letter-spacing:-0.37px;">Materials</div>
<div class="t" style="left:819.7px;top:78.3px;letter-spacing:-0.44px;">Exploded</div>
<div class="t" style="left:830.7px;top:91.3px;letter-spacing:-0.60px;">View</div>
<div class="t" style="left:877.7px;top:78.3px;letter-spacing:-0.56px;">Explode</div>
<div class="t" style="left:887.2px;top:91.3px;letter-spacing:-0.73px;">Line</div>
<div class="t" style="left:880.4px;top:104.3px;letter-spacing:-0.68px;">Sketch</div>
<div class="t" style="left:931.4px;top:78.3px;letter-spacing:-0.30px;">Instant3D</div>
<div class="t" style="left:1000.2px;top:78.3px;letter-spacing:-0.34px;">Update</div>
<div class="t" style="left:994.2px;top:91.3px;letter-spacing:-0.51px;">Speedpak</div>
<div class="t" style="left:1070.7px;top:78.3px;letter-spacing:-1.12px;">Take</div>
<div class="t" style="left:1058.4px;top:91.3px;letter-spacing:-0.35px;">Snapshot</div>
<div class="t" style="left:1127.2px;top:78.3px;letter-spacing:-0.88px;">Asset</div>
<div class="t" style="left:1117.2px;top:91.3px;letter-spacing:-0.25px;">Publisher</div>
<div class="t" style="left:15.7px;top:131.3px;letter-spacing:-0.67px;font-weight:bold;color:#333;">Assembly</div>
<div class="t" style="left:85.7px;top:131.3px;letter-spacing:-0.01px;">Layout</div>
<div class="t" style="left:141.7px;top:131.3px;letter-spacing:-0.34px;">Sketch</div>
<div class="t" style="left:195.7px;top:131.3px;letter-spacing:-0.39px;">Evaluate</div>
<div class="t" style="left:255.7px;top:131.3px;letter-spacing:-0.49px;">SOLIDWORKS Add-Ins</div>
<div class="t" style="left:102.2px;top:206.9px;letter-spacing:-0.28px;font-weight:bold;">Configurations</div>
<div class="t" style="left:54.7px;top:244.0px;letter-spacing:-0.19px;">450 Pro FBL Configuration(s)</div>
<div class="t" style="left:102.2px;top:266.3px;letter-spacing:-0.42px;">Flybarless [ 450 Pro FBL ]</div>
<div class="t" style="left:100.7px;top:288.0px;letter-spacing:-0.60px;color:#8e8e8e;">ExplView1</div>
<div class="t" style="left:105.2px;top:521.1px;letter-spacing:-0.44px;font-weight:bold;">Display States</div>
<div class="t" style="left:55.5px;top:543.9px;letter-spacing:-0.28px;">&lt;Flybarless&gt;_Appearance Display State</div>
<div class="t" style="left:177.0px;top:633.2px;letter-spacing:0.07px;">Add Configuration...</div>
<div class="t" style="left:177.0px;top:657.2px;letter-spacing:-0.43px;">Add SpeedPak</div>
<div class="t" style="left:177.0px;top:681.2px;letter-spacing:-0.24px;">Add Display State</div>
<div class="t" style="left:177.0px;top:705.2px;letter-spacing:-0.18px;">Purge Redundant</div>
<div class="t" style="left:177.0px;top:729.3px;letter-spacing:-0.11px;">Document Properties...</div>
<div class="t" style="left:177.0px;top:753.3px;letter-spacing:-0.21px;">Collapse Items</div>
<div class="t" style="left:177.0px;top:779.3px;letter-spacing:-0.03px;">Customize Menu</div>
<div class="t" style="left:112.7px;top:945.0px;letter-spacing:-0.24px;font-weight:bold;">Model</div>
<div class="t" style="left:167.2px;top:945.0px;letter-spacing:-0.57px;">3D Views</div>
<div class="t" style="left:234.7px;top:945.0px;letter-spacing:0.03px;">Motion Study 2</div>
<div class="t" style="left:934.1px;top:963.7px;letter-spacing:-0.20px;">Under Defined</div>
<div class="t" style="left:1027.7px;top:963.7px;letter-spacing:-0.03px;">Editing Assembly</div>
<div class="t" style="left:1169.7px;top:963.7px;letter-spacing:0.13px;">Custom</div>
<!-- overlay -->
<svg style="left:0;top:0" width="1346" height="986" viewBox="0 0 1346 986">
<!-- cursor -->
<path d="M278.500 679 V693 M271.500 686 H285.500" stroke="#fff" stroke-width="3"/>
<path d="M278.500 679.500 V692.500 M272 686 H285" stroke="#111" stroke-width="1.200"/>
<rect x="283" y="690.500" width="15" height="8" fill="#c9c9c9" stroke="#fff" stroke-width="2.200"/>
<rect x="283" y="690.500" width="15" height="8" fill="none" stroke="#111" stroke-width="1" stroke-dasharray="2 1.200"/>
</svg>

</body>
</html>
